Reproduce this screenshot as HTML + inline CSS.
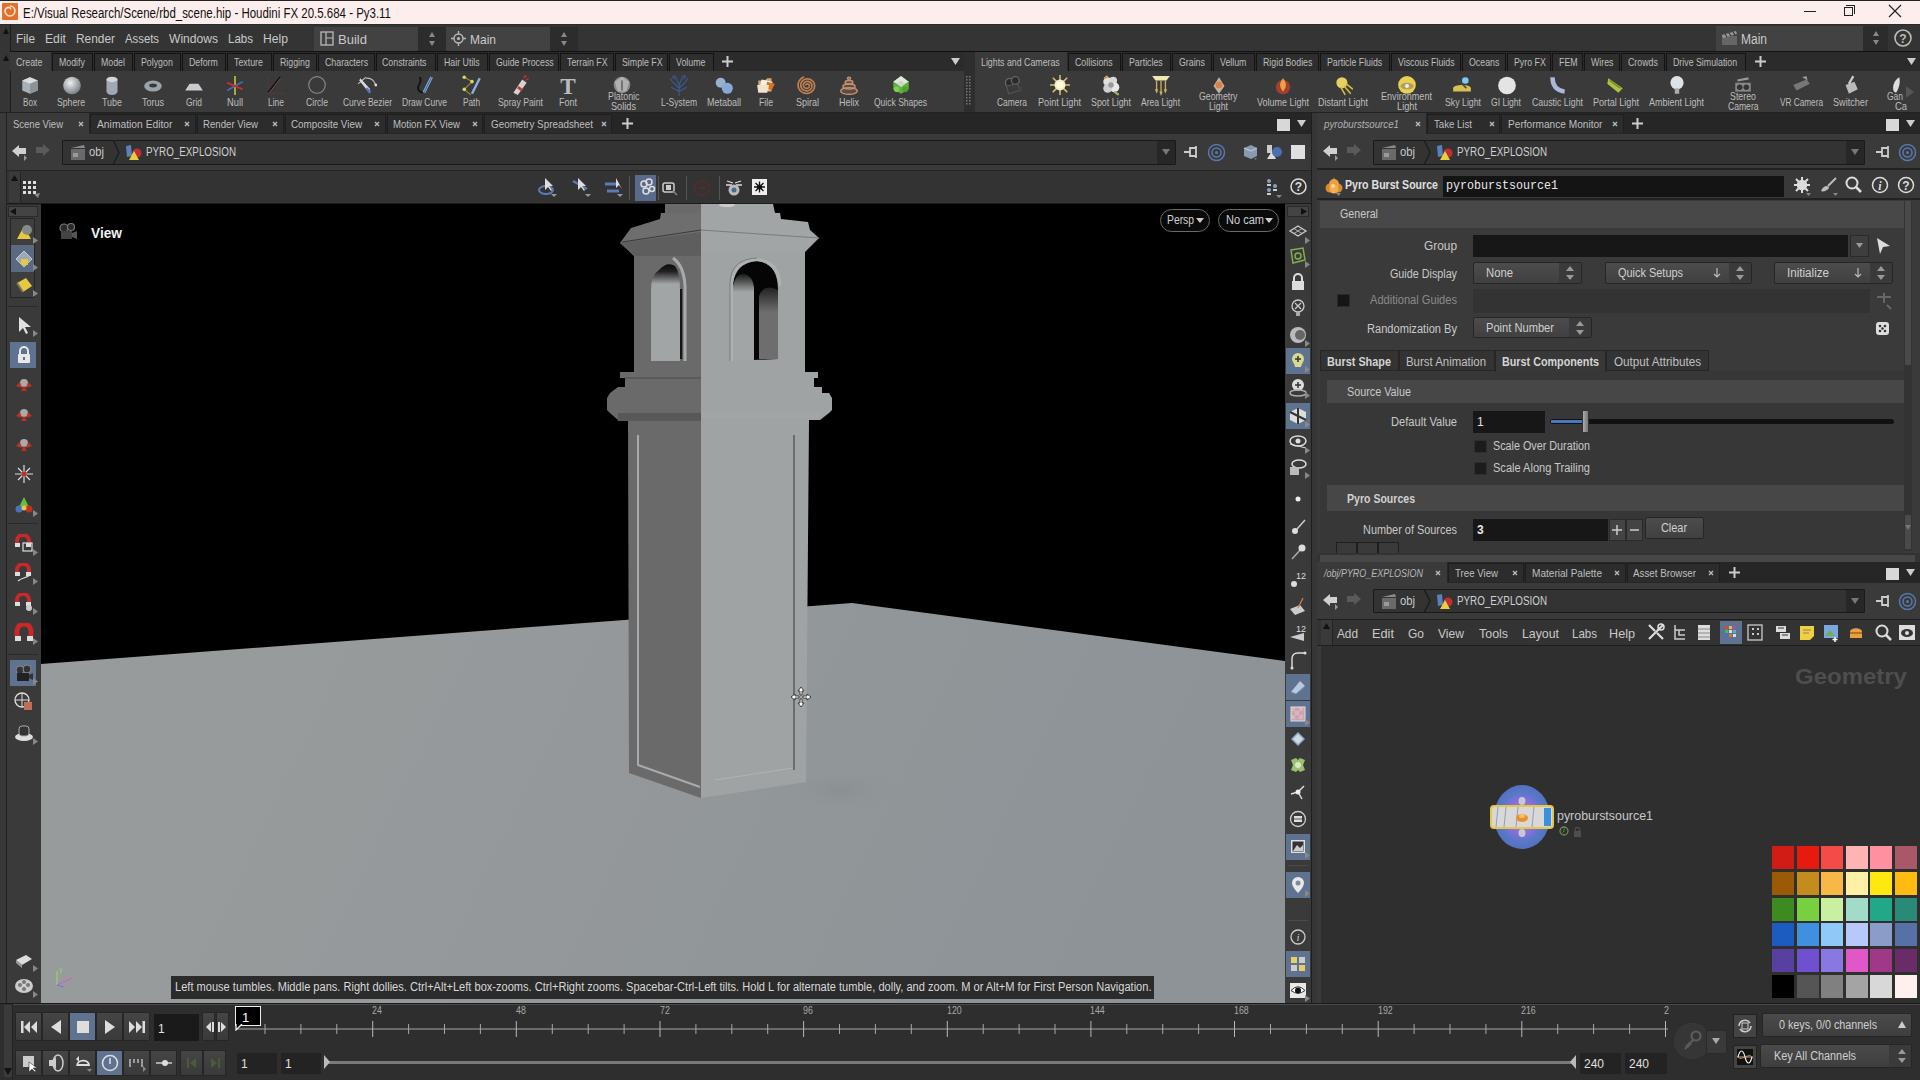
<!DOCTYPE html>
<html><head><meta charset="utf-8">
<style>
*{margin:0;padding:0;box-sizing:border-box}
html,body{width:1920px;height:1080px;overflow:hidden;background:#2e2e2e;font-family:"Liberation Sans",sans-serif;color:#c8c8c8}
.a{position:absolute}
.t{position:absolute;white-space:nowrap;line-height:1;transform-origin:0 0}
</style></head><body>
<div class="a" style="left:0px;top:0px;width:1920px;height:1px;background:#222;"></div>
<div class="a" style="left:0px;top:1px;width:1920px;height:23px;background:#fdeeee;"></div>
<div class="a" style="left:0px;top:24px;width:1920px;height:1px;background:#2a2a2a;"></div>
<div class="a" style="left:2px;top:3px;width:16px;height:17px;background:#e0702a;border-radius:1px"></div>
<svg class="a" style="left:2px;top:3px;" width="16" height="17" viewBox="0 0 16 17"><path d="M8 3 a5 5 0 1 1 -5 5 a3.6 3.6 0 0 1 3.6 -3.6 a2.2 2.2 0 0 1 2.2 2.2" fill="none" stroke="#fbe3cf" stroke-width="1.6"/></svg>
<div class="t" style="left:23.0px;top:5.6px;font-size:14px;color:#101010;font-family:'Liberation Sans',sans-serif;transform:scaleX(0.819);">E:/Visual Research/Scene/rbd_scene.hip - Houdini FX 20.5.684 - Py3.11</div>
<div class="a" style="left:1804px;top:11px;width:12px;height:1px;background:#222;"></div>
<div class="a" style="left:1844px;top:7px;width:9px;height:9px;border:1px solid #222"></div>
<div class="a" style="left:1846px;top:5px;width:9px;height:9px;border-top:1px solid #222;border-right:1px solid #222"></div>
<svg class="a" style="left:1888px;top:4px;" width="14" height="14" viewBox="0 0 14 14"><path d="M1 1L13 13M13 1L1 13" stroke="#222" stroke-width="1.2"/></svg>
<div class="a" style="left:0px;top:25px;width:1920px;height:27px;background:#343434;"></div>
<div class="a" style="left:0px;top:51px;width:1920px;height:1px;background:#111;"></div>
<div class="a" style="left:0px;top:25px;width:10px;height:27px;background:#353535;"></div>
<div class="a" style="left:10px;top:25px;width:1px;height:27px;background:#1c1c1c;"></div>
<svg class="a" style="left:2px;top:27px;" width="8" height="8" viewBox="0 0 8 8"><path d="M4 1L7 7H1Z" fill="#111"/></svg>
<div class="t" style="left:16.0px;top:32.3px;font-size:13px;color:#c9c9c9;font-family:'Liberation Sans',sans-serif;transform:scaleX(0.907);">File</div>
<div class="t" style="left:45.0px;top:32.3px;font-size:13px;color:#c9c9c9;font-family:'Liberation Sans',sans-serif;transform:scaleX(0.937);">Edit</div>
<div class="t" style="left:76.0px;top:32.3px;font-size:13px;color:#c9c9c9;font-family:'Liberation Sans',sans-serif;transform:scaleX(0.915);">Render</div>
<div class="t" style="left:125.0px;top:32.3px;font-size:13px;color:#c9c9c9;font-family:'Liberation Sans',sans-serif;transform:scaleX(0.871);">Assets</div>
<div class="t" style="left:169.0px;top:32.3px;font-size:13px;color:#c9c9c9;font-family:'Liberation Sans',sans-serif;transform:scaleX(0.929);">Windows</div>
<div class="t" style="left:228.0px;top:32.3px;font-size:13px;color:#c9c9c9;font-family:'Liberation Sans',sans-serif;transform:scaleX(0.887);">Labs</div>
<div class="t" style="left:263.0px;top:32.3px;font-size:13px;color:#c9c9c9;font-family:'Liberation Sans',sans-serif;transform:scaleX(0.935);">Help</div>
<div class="a" style="left:314px;top:27px;width:132px;height:24px;background:#424242"></div>
<div class="a" style="left:418px;top:27px;width:28px;height:24px;background:#2c2c2c;"></div>
<svg class="a" style="left:320px;top:31px;" width="14" height="15" viewBox="0 0 14 15"><rect x="1" y="1" width="12" height="13" fill="none" stroke="#bbb" stroke-width="1.3"/><path d="M6 1V14M6 7H13" stroke="#bbb" stroke-width="1.2"/></svg>
<div class="t" style="left:338.0px;top:32.5px;font-size:13px;color:#c9c9c9;font-family:'Liberation Sans',sans-serif;">Build</div>
<svg class="a" style="left:427px;top:31px;" width="10" height="16" viewBox="0 0 10 16"><path d="M5 1L8 6H2Z M5 15L8 10H2Z" fill="#888"/></svg>
<div class="a" style="left:446px;top:27px;width:132px;height:24px;background:#424242"></div>
<div class="a" style="left:550px;top:27px;width:28px;height:24px;background:#2c2c2c;"></div>
<svg class="a" style="left:451px;top:31px;" width="15" height="15" viewBox="0 0 15 15"><circle cx="7.5" cy="7.5" r="4.5" fill="none" stroke="#bbb" stroke-width="1.4"/><circle cx="7.5" cy="7.5" r="1.6" fill="#bbb"/><path d="M7.5 0V3M7.5 12V15M0 7.5H3M12 7.5H15" stroke="#bbb" stroke-width="1.3"/></svg>
<div class="t" style="left:470.0px;top:32.5px;font-size:13px;color:#c9c9c9;font-family:'Liberation Sans',sans-serif;transform:scaleX(0.923);">Main</div>
<svg class="a" style="left:559px;top:31px;" width="10" height="16" viewBox="0 0 10 16"><path d="M5 1L8 6H2Z M5 15L8 10H2Z" fill="#888"/></svg>
<div class="a" style="left:1716px;top:26px;width:172px;height:25px;background:#424242"></div>
<div class="a" style="left:1863px;top:26px;width:25px;height:25px;background:#2c2c2c;"></div>
<svg class="a" style="left:1721px;top:30px;" width="17" height="16" viewBox="0 0 17 16"><rect x="1" y="6" width="15" height="9" fill="#666"/><path d="M1 5L15 1L16 4L2 8Z" fill="#999"/><path d="M4 4L6 7M8 3L10 6M12 2L14 5" stroke="#333" stroke-width="1.2"/></svg>
<div class="t" style="left:1741.0px;top:31.6px;font-size:14px;color:#c9c9c9;font-family:'Liberation Sans',sans-serif;transform:scaleX(0.857);">Main</div>
<svg class="a" style="left:1871px;top:30px;" width="10" height="16" viewBox="0 0 10 16"><path d="M5 1L8 6H2Z M5 15L8 10H2Z" fill="#888"/></svg>
<svg class="a" style="left:1893px;top:28px;" width="20" height="20" viewBox="0 0 20 20"><circle cx="10" cy="10" r="8" fill="none" stroke="#bbb" stroke-width="1.6"/><text x="10" y="14.5" font-size="12" font-weight="bold" text-anchor="middle" fill="#bbb" font-family="Liberation Sans">?</text></svg>
<div class="a" style="left:0px;top:52px;width:1920px;height:19px;background:#2b2b2b;"></div>
<div class="a" style="left:0px;top:52px;width:10px;height:61px;background:#353535;"></div>
<div class="a" style="left:10px;top:52px;width:1px;height:61px;background:#1c1c1c;"></div>
<svg class="a" style="left:2px;top:54px;" width="8" height="8" viewBox="0 0 8 8"><path d="M4 1L7 7H1Z" fill="#111"/></svg>
<div class="a" style="left:10px;top:52px;width:41px;height:19px;background:#3a3a3a;"></div>
<div class="t" style="left:16.0px;top:56.5px;font-size:11px;color:#bdbdbd;font-family:'Liberation Sans',sans-serif;transform:scaleX(0.800);">Create</div>
<div class="a" style="left:52px;top:53px;width:41px;height:18px;background:#2e2e2e;border:1px solid #141414;border-bottom:none"></div>
<div class="t" style="left:59.0px;top:56.5px;font-size:11px;color:#bdbdbd;font-family:'Liberation Sans',sans-serif;transform:scaleX(0.800);">Modify</div>
<div class="a" style="left:94px;top:53px;width:39px;height:18px;background:#2e2e2e;border:1px solid #141414;border-bottom:none"></div>
<div class="t" style="left:101.0px;top:56.5px;font-size:11px;color:#bdbdbd;font-family:'Liberation Sans',sans-serif;transform:scaleX(0.800);">Model</div>
<div class="a" style="left:134px;top:53px;width:47px;height:18px;background:#2e2e2e;border:1px solid #141414;border-bottom:none"></div>
<div class="t" style="left:141.0px;top:56.5px;font-size:11px;color:#bdbdbd;font-family:'Liberation Sans',sans-serif;transform:scaleX(0.800);">Polygon</div>
<div class="a" style="left:182px;top:53px;width:44px;height:18px;background:#2e2e2e;border:1px solid #141414;border-bottom:none"></div>
<div class="t" style="left:189.0px;top:56.5px;font-size:11px;color:#bdbdbd;font-family:'Liberation Sans',sans-serif;transform:scaleX(0.800);">Deform</div>
<div class="a" style="left:227px;top:53px;width:45px;height:18px;background:#2e2e2e;border:1px solid #141414;border-bottom:none"></div>
<div class="t" style="left:234.0px;top:56.5px;font-size:11px;color:#bdbdbd;font-family:'Liberation Sans',sans-serif;transform:scaleX(0.800);">Texture</div>
<div class="a" style="left:273px;top:53px;width:44px;height:18px;background:#2e2e2e;border:1px solid #141414;border-bottom:none"></div>
<div class="t" style="left:280.0px;top:56.5px;font-size:11px;color:#bdbdbd;font-family:'Liberation Sans',sans-serif;transform:scaleX(0.800);">Rigging</div>
<div class="a" style="left:318px;top:53px;width:57px;height:18px;background:#2e2e2e;border:1px solid #141414;border-bottom:none"></div>
<div class="t" style="left:325.0px;top:56.5px;font-size:11px;color:#bdbdbd;font-family:'Liberation Sans',sans-serif;transform:scaleX(0.800);">Characters</div>
<div class="a" style="left:376px;top:53px;width:60px;height:18px;background:#2e2e2e;border:1px solid #141414;border-bottom:none"></div>
<div class="t" style="left:382.0px;top:56.5px;font-size:11px;color:#bdbdbd;font-family:'Liberation Sans',sans-serif;transform:scaleX(0.800);">Constraints</div>
<div class="a" style="left:437px;top:53px;width:51px;height:18px;background:#2e2e2e;border:1px solid #141414;border-bottom:none"></div>
<div class="t" style="left:444.0px;top:56.5px;font-size:11px;color:#bdbdbd;font-family:'Liberation Sans',sans-serif;transform:scaleX(0.800);">Hair Utils</div>
<div class="a" style="left:489px;top:53px;width:70px;height:18px;background:#2e2e2e;border:1px solid #141414;border-bottom:none"></div>
<div class="t" style="left:496.0px;top:56.5px;font-size:11px;color:#bdbdbd;font-family:'Liberation Sans',sans-serif;transform:scaleX(0.800);">Guide Process</div>
<div class="a" style="left:560px;top:53px;width:54px;height:18px;background:#2e2e2e;border:1px solid #141414;border-bottom:none"></div>
<div class="t" style="left:567.0px;top:56.5px;font-size:11px;color:#bdbdbd;font-family:'Liberation Sans',sans-serif;transform:scaleX(0.800);">Terrain FX</div>
<div class="a" style="left:615px;top:53px;width:53px;height:18px;background:#2e2e2e;border:1px solid #141414;border-bottom:none"></div>
<div class="t" style="left:622.0px;top:56.5px;font-size:11px;color:#bdbdbd;font-family:'Liberation Sans',sans-serif;transform:scaleX(0.800);">Simple FX</div>
<div class="a" style="left:669px;top:53px;width:45px;height:18px;background:#2e2e2e;border:1px solid #141414;border-bottom:none"></div>
<div class="t" style="left:676.0px;top:56.5px;font-size:11px;color:#bdbdbd;font-family:'Liberation Sans',sans-serif;transform:scaleX(0.800);">Volume</div>
<svg class="a" style="left:722px;top:56px;" width="11" height="11" viewBox="0 0 11 11"><path d="M5.5 0V11M0 5.5H11" stroke="#ccc" stroke-width="2"/></svg>
<svg class="a" style="left:951px;top:58px;" width="9" height="7" viewBox="0 0 9 7"><path d="M0 0H9L4.5 7Z" fill="#ccc"/></svg>
<div class="a" style="left:964px;top:52px;width:11px;height:61px;background:#2e2e2e;"></div>
<svg class="a" style="left:966px;top:76px;" width="6" height="30" viewBox="0 0 6 30"><rect x="0" y="0" width="1.5" height="1.5" fill="#777"/><rect x="0" y="3" width="1.5" height="1.5" fill="#777"/><rect x="0" y="6" width="1.5" height="1.5" fill="#777"/><rect x="0" y="9" width="1.5" height="1.5" fill="#777"/><rect x="0" y="12" width="1.5" height="1.5" fill="#777"/><rect x="0" y="15" width="1.5" height="1.5" fill="#777"/><rect x="0" y="18" width="1.5" height="1.5" fill="#777"/><rect x="0" y="21" width="1.5" height="1.5" fill="#777"/><rect x="0" y="24" width="1.5" height="1.5" fill="#777"/><rect x="0" y="27" width="1.5" height="1.5" fill="#777"/><rect x="3" y="0" width="1.5" height="1.5" fill="#777"/><rect x="3" y="3" width="1.5" height="1.5" fill="#777"/><rect x="3" y="6" width="1.5" height="1.5" fill="#777"/><rect x="3" y="9" width="1.5" height="1.5" fill="#777"/><rect x="3" y="12" width="1.5" height="1.5" fill="#777"/><rect x="3" y="15" width="1.5" height="1.5" fill="#777"/><rect x="3" y="18" width="1.5" height="1.5" fill="#777"/><rect x="3" y="21" width="1.5" height="1.5" fill="#777"/><rect x="3" y="24" width="1.5" height="1.5" fill="#777"/><rect x="3" y="27" width="1.5" height="1.5" fill="#777"/></svg>
<div class="a" style="left:975px;top:52px;width:92px;height:19px;background:#3a3a3a;"></div>
<div class="t" style="left:981.0px;top:56.5px;font-size:11px;color:#bdbdbd;font-family:'Liberation Sans',sans-serif;transform:scaleX(0.800);">Lights and Cameras</div>
<div class="a" style="left:1068px;top:53px;width:53px;height:18px;background:#2e2e2e;border:1px solid #141414;border-bottom:none"></div>
<div class="t" style="left:1075.0px;top:56.5px;font-size:11px;color:#bdbdbd;font-family:'Liberation Sans',sans-serif;transform:scaleX(0.800);">Collisions</div>
<div class="a" style="left:1122px;top:53px;width:49px;height:18px;background:#2e2e2e;border:1px solid #141414;border-bottom:none"></div>
<div class="t" style="left:1129.0px;top:56.5px;font-size:11px;color:#bdbdbd;font-family:'Liberation Sans',sans-serif;transform:scaleX(0.800);">Particles</div>
<div class="a" style="left:1172px;top:53px;width:40px;height:18px;background:#2e2e2e;border:1px solid #141414;border-bottom:none"></div>
<div class="t" style="left:1179.0px;top:56.5px;font-size:11px;color:#bdbdbd;font-family:'Liberation Sans',sans-serif;transform:scaleX(0.800);">Grains</div>
<div class="a" style="left:1213px;top:53px;width:42px;height:18px;background:#2e2e2e;border:1px solid #141414;border-bottom:none"></div>
<div class="t" style="left:1220.0px;top:56.5px;font-size:11px;color:#bdbdbd;font-family:'Liberation Sans',sans-serif;transform:scaleX(0.800);">Vellum</div>
<div class="a" style="left:1256px;top:53px;width:63px;height:18px;background:#2e2e2e;border:1px solid #141414;border-bottom:none"></div>
<div class="t" style="left:1263.0px;top:56.5px;font-size:11px;color:#bdbdbd;font-family:'Liberation Sans',sans-serif;transform:scaleX(0.800);">Rigid Bodies</div>
<div class="a" style="left:1320px;top:53px;width:70px;height:18px;background:#2e2e2e;border:1px solid #141414;border-bottom:none"></div>
<div class="t" style="left:1327.0px;top:56.5px;font-size:11px;color:#bdbdbd;font-family:'Liberation Sans',sans-serif;transform:scaleX(0.800);">Particle Fluids</div>
<div class="a" style="left:1391px;top:53px;width:70px;height:18px;background:#2e2e2e;border:1px solid #141414;border-bottom:none"></div>
<div class="t" style="left:1398.0px;top:56.5px;font-size:11px;color:#bdbdbd;font-family:'Liberation Sans',sans-serif;transform:scaleX(0.800);">Viscous Fluids</div>
<div class="a" style="left:1462px;top:53px;width:44px;height:18px;background:#2e2e2e;border:1px solid #141414;border-bottom:none"></div>
<div class="t" style="left:1469.0px;top:56.5px;font-size:11px;color:#bdbdbd;font-family:'Liberation Sans',sans-serif;transform:scaleX(0.800);">Oceans</div>
<div class="a" style="left:1507px;top:53px;width:44px;height:18px;background:#2e2e2e;border:1px solid #141414;border-bottom:none"></div>
<div class="t" style="left:1514.0px;top:56.5px;font-size:11px;color:#bdbdbd;font-family:'Liberation Sans',sans-serif;transform:scaleX(0.800);">Pyro FX</div>
<div class="a" style="left:1552px;top:53px;width:31px;height:18px;background:#2e2e2e;border:1px solid #141414;border-bottom:none"></div>
<div class="t" style="left:1559.0px;top:56.5px;font-size:11px;color:#bdbdbd;font-family:'Liberation Sans',sans-serif;transform:scaleX(0.800);">FEM</div>
<div class="a" style="left:1584px;top:53px;width:36px;height:18px;background:#2e2e2e;border:1px solid #141414;border-bottom:none"></div>
<div class="t" style="left:1591.0px;top:56.5px;font-size:11px;color:#bdbdbd;font-family:'Liberation Sans',sans-serif;transform:scaleX(0.800);">Wires</div>
<div class="a" style="left:1621px;top:53px;width:44px;height:18px;background:#2e2e2e;border:1px solid #141414;border-bottom:none"></div>
<div class="t" style="left:1628.0px;top:56.5px;font-size:11px;color:#bdbdbd;font-family:'Liberation Sans',sans-serif;transform:scaleX(0.800);">Crowds</div>
<div class="a" style="left:1666px;top:53px;width:80px;height:18px;background:#2e2e2e;border:1px solid #141414;border-bottom:none"></div>
<div class="t" style="left:1673.0px;top:56.5px;font-size:11px;color:#bdbdbd;font-family:'Liberation Sans',sans-serif;transform:scaleX(0.800);">Drive Simulation</div>
<svg class="a" style="left:1755px;top:56px;" width="11" height="11" viewBox="0 0 11 11"><path d="M5.5 0V11M0 5.5H11" stroke="#ccc" stroke-width="2"/></svg>
<svg class="a" style="left:1907px;top:58px;" width="9" height="7" viewBox="0 0 9 7"><path d="M0 0H9L4.5 7Z" fill="#ccc"/></svg>
<div class="a" style="left:11px;top:71px;width:953px;height:42px;background:#3a3a3a;"></div>
<div class="a" style="left:975px;top:71px;width:945px;height:42px;background:#3a3a3a;"></div>
<div class="a" style="left:0px;top:112px;width:1920px;height:1px;background:#222;"></div>
<svg class="a" style="left:20px;top:75px" width="20" height="21" viewBox="0 0 18 19"><path d="M2 5L9 2L16 5V14L9 17L2 14Z" fill="#a8b0b8"/><path d="M2 5L9 8L16 5L9 2Z" fill="#d8dde2"/><path d="M9 8V17L16 14V5Z" fill="#8a929a"/></svg>
<div class="t" style="left:23.0px;top:97.4px;font-size:10.5px;color:#bdbdbd;font-family:'Liberation Sans',sans-serif;transform:scaleX(0.774);">Box</div>
<svg class="a" style="left:62px;top:75px" width="20" height="21" viewBox="0 0 18 19"><defs><radialGradient id="gs" cx="0.4" cy="0.35" r="0.7"><stop offset="0" stop-color="#f0f0f0"/><stop offset="1" stop-color="#707880"/></radialGradient></defs><circle cx="9" cy="9.5" r="8" fill="url(#gs)"/></svg>
<div class="t" style="left:57.0px;top:97.4px;font-size:10.5px;color:#bdbdbd;font-family:'Liberation Sans',sans-serif;transform:scaleX(0.827);">Sphere</div>
<svg class="a" style="left:102px;top:75px" width="20" height="21" viewBox="0 0 18 19"><rect x="4" y="2" width="10" height="16" rx="5" ry="3" fill="#a0a8b0"/><ellipse cx="9" cy="4" rx="5" ry="2.5" fill="#d0d6dc"/></svg>
<div class="t" style="left:102.0px;top:97.4px;font-size:10.5px;color:#bdbdbd;font-family:'Liberation Sans',sans-serif;transform:scaleX(0.849);">Tube</div>
<svg class="a" style="left:143px;top:75px" width="20" height="21" viewBox="0 0 18 19"><ellipse cx="9" cy="10" rx="8" ry="5" fill="#9aa2aa"/><ellipse cx="9" cy="9.5" rx="3.5" ry="1.8" fill="#3a3a3a"/></svg>
<div class="t" style="left:142.0px;top:97.4px;font-size:10.5px;color:#bdbdbd;font-family:'Liberation Sans',sans-serif;transform:scaleX(0.857);">Torus</div>
<svg class="a" style="left:184px;top:75px" width="20" height="21" viewBox="0 0 18 19"><path d="M5 8H13L17 14H1Z" fill="#c8ccd0"/></svg>
<div class="t" style="left:186.0px;top:97.4px;font-size:10.5px;color:#bdbdbd;font-family:'Liberation Sans',sans-serif;transform:scaleX(0.807);">Grid</div>
<svg class="a" style="left:225px;top:75px" width="20" height="21" viewBox="0 0 18 19"><path d="M9 1V18" stroke="#c0c040" stroke-width="1.5"/><path d="M2 14L16 6" stroke="#4070c0" stroke-width="1.5"/><path d="M2 7L16 13" stroke="#c03030" stroke-width="1.8"/></svg>
<div class="t" style="left:227.0px;top:97.4px;font-size:10.5px;color:#bdbdbd;font-family:'Liberation Sans',sans-serif;transform:scaleX(0.885);">Null</div>
<svg class="a" style="left:266px;top:75px" width="20" height="21" viewBox="0 0 18 19"><path d="M2 1V17H17" stroke="#5a3a3a" stroke-width="0.8" fill="none"/><path d="M2 16L13 2" stroke="#111" stroke-width="1.8"/><path d="M2.5 16.5L13.5 2.5" stroke="#c06060" stroke-width="0.6"/></svg>
<div class="t" style="left:268.0px;top:97.4px;font-size:10.5px;color:#bdbdbd;font-family:'Liberation Sans',sans-serif;transform:scaleX(0.806);">Line</div>
<svg class="a" style="left:307px;top:75px" width="20" height="21" viewBox="0 0 18 19"><circle cx="9" cy="9" r="7.5" fill="none" stroke="#8a8a8a" stroke-width="1"/></svg>
<div class="t" style="left:306.0px;top:97.4px;font-size:10.5px;color:#bdbdbd;font-family:'Liberation Sans',sans-serif;transform:scaleX(0.820);">Circle</div>
<svg class="a" style="left:357px;top:75px" width="20" height="21" viewBox="0 0 18 19"><path d="M8 3Q14 2 17 9" stroke="#bbb" stroke-width="1" fill="none"/><circle cx="17" cy="9" r="1.3" fill="#ddd"/><path d="M1 8L8 2" stroke="#bbb" stroke-width="1"/><path d="M3 3L12 13L10 15L2 5Z" fill="#d8d8e0"/><path d="M9 11L13 15L11 17L8 13Z" fill="#5a70c0"/></svg>
<div class="t" style="left:343.0px;top:97.4px;font-size:10.5px;color:#bdbdbd;font-family:'Liberation Sans',sans-serif;transform:scaleX(0.807);">Curve Bezier</div>
<svg class="a" style="left:415px;top:75px" width="20" height="21" viewBox="0 0 18 19"><path d="M4 2C8 6 1 9 3 13C4 16 7 16 8 15" stroke="#111" stroke-width="1.6" fill="none"/><path d="M8 16L15 2" stroke="#8ab0e0" stroke-width="2.5"/><path d="M8 16L15 2" stroke="#4a6ab0" stroke-width="1"/></svg>
<div class="t" style="left:402.0px;top:97.4px;font-size:10.5px;color:#bdbdbd;font-family:'Liberation Sans',sans-serif;transform:scaleX(0.812);">Draw Curve</div>
<svg class="a" style="left:462px;top:75px" width="20" height="21" viewBox="0 0 18 19"><path d="M2 2L9 6L2 13L8 18" stroke="#a09040" stroke-width="1" fill="none"/><circle cx="2" cy="2" r="1.6" fill="#d8d860"/><circle cx="9" cy="6" r="1.6" fill="#d8d860"/><circle cx="2" cy="13" r="1.6" fill="#d8d860"/><path d="M9 17L16 3" stroke="#8ab0e0" stroke-width="2.2"/></svg>
<div class="t" style="left:463.0px;top:97.4px;font-size:10.5px;color:#bdbdbd;font-family:'Liberation Sans',sans-serif;transform:scaleX(0.787);">Path</div>
<svg class="a" style="left:510px;top:75px" width="20" height="21" viewBox="0 0 18 19"><path d="M3 16L11 4L15 7L7 18Z" fill="#d8d0d0"/><path d="M7 11L11 14" stroke="#b04040" stroke-width="2.5"/><path d="M12 3L15 1M14 5L17 3M13 1L14 0" stroke="#c03030" stroke-width="1.2"/></svg>
<div class="t" style="left:498.0px;top:97.4px;font-size:10.5px;color:#bdbdbd;font-family:'Liberation Sans',sans-serif;transform:scaleX(0.829);">Spray Paint</div>
<svg class="a" style="left:558px;top:75px" width="20" height="21" viewBox="0 0 18 19"><text x="9" y="17" font-size="21" font-weight="bold" text-anchor="middle" fill="#b8bcc0" font-family="Liberation Serif">T</text></svg>
<div class="t" style="left:559.0px;top:97.4px;font-size:10.5px;color:#bdbdbd;font-family:'Liberation Sans',sans-serif;transform:scaleX(0.857);">Font</div>
<svg class="a" style="left:612px;top:75px" width="20" height="21" viewBox="0 0 18 19"><circle cx="9" cy="9" r="7.5" fill="#8a8a8a"/><path d="M9 1.5L15.5 6L13 15L5 15L2.5 6Z" fill="#b0b0b0"/><path d="M9 5V14" stroke="#555" stroke-width="1.2"/></svg>
<svg class="a" style="left:669px;top:75px" width="20" height="21" viewBox="0 0 18 19"><path d="M9 19V8M9 12L3 6M9 12L15 6M9 9L6 2M9 9L12 2M9 15L2 11M9 15L16 11M3 6L1 3M15 6L17 3M6 2L4 0M12 2L14 0M5 4L3 1M13 4L15 1" stroke="#3a5a98" stroke-width="1"/></svg>
<div class="t" style="left:661.0px;top:97.4px;font-size:10.5px;color:#bdbdbd;font-family:'Liberation Sans',sans-serif;transform:scaleX(0.812);">L-System</div>
<svg class="a" style="left:714px;top:75px" width="20" height="21" viewBox="0 0 18 19"><circle cx="6" cy="7" r="4.5" fill="#9ab0d0"/><circle cx="12" cy="12" r="5" fill="#88a8d8"/></svg>
<div class="t" style="left:707.0px;top:97.4px;font-size:10.5px;color:#bdbdbd;font-family:'Liberation Sans',sans-serif;transform:scaleX(0.857);">Metaball</div>
<svg class="a" style="left:756px;top:75px" width="20" height="21" viewBox="0 0 18 19"><path d="M2 5H8L10 3H14V15H2Z" fill="#d8a070"/><path d="M5 4L15 6L13 14L3 12Z" fill="#f4f0e8"/><path d="M10 6L17 8L14 14L9 12Z" fill="#e07020"/><path d="M1 9H12L10 16H2Z" fill="#f0e4d0"/></svg>
<div class="t" style="left:759.0px;top:97.4px;font-size:10.5px;color:#bdbdbd;font-family:'Liberation Sans',sans-serif;transform:scaleX(0.827);">File</div>
<svg class="a" style="left:797px;top:75px" width="20" height="21" viewBox="0 0 18 19"><path d="M8.10 9.50 L8.07 9.41 L8.04 9.31 L8.03 9.21 L8.03 9.11 L8.04 9.00 L8.07 8.89 L8.11 8.78 L8.17 8.67 L8.23 8.57 L8.32 8.47 L8.41 8.37 L8.52 8.29 L8.64 8.21 L8.78 8.15 L8.92 8.10 L9.07 8.06 L9.23 8.04 L9.39 8.03 L9.56 8.05 L9.73 8.07 L9.89 8.12 L10.06 8.18 L10.22 8.26 L10.37 8.36 L10.52 8.48 L10.65 8.61 L10.77 8.76 L10.88 8.92 L10.97 9.10 L11.04 9.29 L11.09 9.48 L11.12 9.68 L11.13 9.89 L11.11 10.11 L11.07 10.32 L11.01 10.53 L10.92 10.74 L10.81 10.94 L10.67 11.13 L10.51 11.31 L10.33 11.48 L10.14 11.63 L9.92 11.76 L9.68 11.87 L9.43 11.96 L9.17 12.03 L8.90 12.07 L8.62 12.08 L8.34 12.07 L8.06 12.03 L7.78 11.96 L7.51 11.86 L7.24 11.73 L6.99 11.58 L6.75 11.40 L6.53 11.20 L6.33 10.97 L6.15 10.72 L6.00 10.45 L5.87 10.17 L5.78 9.87 L5.72 9.56 L5.69 9.24 L5.70 8.92 L5.74 8.60 L5.82 8.27 L5.93 7.96 L6.08 7.65 L6.26 7.36 L6.47 7.08 L6.72 6.82 L6.99 6.59 L7.30 6.38 L7.62 6.20 L7.97 6.05 L8.33 5.93 L8.71 5.85 L9.10 5.80 L9.50 5.79 L9.90 5.83 L10.30 5.90 L10.69 6.01 L11.07 6.15 L11.44 6.34 L11.79 6.56 L12.12 6.82 L12.41 7.11 L12.68 7.43 L12.92 7.78 L13.12 8.15 L13.28 8.55 L13.40 8.96 L13.47 9.38 L13.50 9.81 L13.48 10.25 L13.41 10.68 L13.30 11.11 L13.14 11.53 L12.94 11.94 L12.69 12.33 L12.40 12.69 L12.07 13.03 L11.70 13.34 L11.29 13.61 L10.86 13.84 L10.40 14.03 L9.92 14.18 L9.42 14.28 L8.91 14.33 L8.39 14.33 L7.88 14.29 L7.36 14.19 L6.86 14.04 L6.37 13.84 L5.90 13.60 L5.45 13.31 L5.04 12.97 L4.66 12.60 L4.32 12.18 L4.02 11.74 L3.77 11.26 L3.58 10.76 L3.43 10.24 L3.34 9.70 L3.31 9.16 L3.34 8.61 L3.43 8.06 L3.57 7.52 L3.77 7.00 L4.03 6.49 L4.35 6.00 L4.72 5.55 L5.13 5.13 L5.60 4.76 L6.10 4.42 L6.64 4.14 L7.21 3.90 L7.80 3.72 L8.42 3.60 L9.05 3.54 L9.69 3.54 L10.32 3.60 L10.96 3.72 L11.57 3.90 L12.17 4.15 L12.75 4.45 L13.29 4.81 L13.80 5.22 L14.26 5.68 L14.67 6.18 L15.03 6.72 L15.33 7.30 L15.56 7.91 L15.74 8.54 L15.84 9.19 L15.88 9.85 L15.85 10.51 L15.74 11.17 L15.56 11.82 L15.32 12.46 L15.00 13.07 L14.63 13.65 L14.18 14.19 L13.68 14.69 L13.13 15.14 L12.53 15.54 L11.89 15.88 L11.21 16.16 L10.49 16.37 L9.76 16.52 L9.01 16.59 L8.25 16.59 L7.50 16.52 L6.75 16.38 L6.02 16.16 L5.30 15.87 L4.63 15.51 L3.98 15.09 L3.39 14.61 L2.84 14.07 L2.36 13.47 L1.94 12.83 L1.58 12.15 L1.30 11.44 L1.10 10.70 L0.97 9.93 L0.93 9.16 L0.97 8.38 L1.09 7.61 L1.29 6.85 L1.58 6.11 L1.95 5.40 L2.39 4.72 L2.90 4.09 L3.48 3.50 L4.12 2.97 L4.82 2.51 L5.57 2.11 L6.36 1.78" stroke="#c08050" stroke-width="1.5" fill="none"/></svg>
<div class="t" style="left:796.0px;top:97.4px;font-size:10.5px;color:#bdbdbd;font-family:'Liberation Sans',sans-serif;transform:scaleX(0.857);">Spiral</div>
<svg class="a" style="left:839px;top:75px" width="20" height="21" viewBox="0 0 18 19"><path d="M9 1L1 14Q9 20 17 14Z" fill="#7a6050" opacity="0.5"/><ellipse cx="9" cy="14.5" rx="7.5" ry="3" fill="none" stroke="#c89070" stroke-width="1.3"/><ellipse cx="9" cy="10.5" rx="5.5" ry="2.3" fill="none" stroke="#c89070" stroke-width="1.3"/><ellipse cx="9" cy="6.5" rx="3.5" ry="1.6" fill="none" stroke="#c89070" stroke-width="1.3"/><ellipse cx="9" cy="3" rx="1.5" ry="1" fill="none" stroke="#c89070" stroke-width="1.2"/></svg>
<div class="t" style="left:839.0px;top:97.4px;font-size:10.5px;color:#bdbdbd;font-family:'Liberation Sans',sans-serif;transform:scaleX(0.857);">Helix</div>
<svg class="a" style="left:891px;top:75px" width="20" height="21" viewBox="0 0 18 19"><path d="M9 1L16 6L16 13L9 17L2 13L2 6Z" fill="#60b040"/><path d="M9 1L16 6L9 10L2 6Z" fill="#e0e8e0"/><path d="M5 8L9 5L13 8L9 11Z" fill="#c8d8c8"/><circle cx="5" cy="13" r="2.5" fill="#80d050"/><circle cx="13" cy="13" r="2.5" fill="#50a030"/></svg>
<div class="t" style="left:874.0px;top:97.4px;font-size:10.5px;color:#bdbdbd;font-family:'Liberation Sans',sans-serif;transform:scaleX(0.811);">Quick Shapes</div>
<svg class="a" style="left:1002px;top:75px" width="20" height="21" viewBox="0 0 18 19"><circle cx="7" cy="7" r="4" fill="#2a2a2a" stroke="#666" stroke-width="1.2"/><circle cx="12" cy="5" r="3.5" fill="#2a2a2a" stroke="#666" stroke-width="1.2"/><path d="M4 10L14 8L16 14L6 17Z" fill="#3a3a3a" stroke="#555"/><path d="M14 11L18 10V16L15 15Z" fill="#444"/></svg>
<div class="t" style="left:997.0px;top:97.4px;font-size:10.5px;color:#bdbdbd;font-family:'Liberation Sans',sans-serif;transform:scaleX(0.803);">Camera</div>
<svg class="a" style="left:1050px;top:75px" width="20" height="21" viewBox="0 0 18 19"><path d="M9 0V18M0 9H18M2.5 2.5L15.5 15.5M15.5 2.5L2.5 15.5" stroke="#d8c070" stroke-width="1.4"/><circle cx="9" cy="9" r="5" fill="#f4f0c0"/><circle cx="9" cy="9" r="3" fill="#fffbe0"/></svg>
<div class="t" style="left:1038.0px;top:97.4px;font-size:10.5px;color:#bdbdbd;font-family:'Liberation Sans',sans-serif;transform:scaleX(0.867);">Point Light</div>
<svg class="a" style="left:1101px;top:75px" width="20" height="21" viewBox="0 0 18 19"><circle cx="6" cy="6" r="4" fill="#e0e0e0"/><circle cx="11" cy="5" r="3.5" fill="#d8d8d8"/><circle cx="12" cy="11" r="4.5" fill="#e8e8e8"/><circle cx="6" cy="12" r="4" fill="#cfcfcf"/><circle cx="9" cy="9" r="2.5" fill="#999"/><path d="M12 15L16 18" stroke="#a0b060" stroke-width="2"/><path d="M3 3L6 1" stroke="#d0a050" stroke-width="2"/></svg>
<div class="t" style="left:1091.0px;top:97.4px;font-size:10.5px;color:#bdbdbd;font-family:'Liberation Sans',sans-serif;transform:scaleX(0.846);">Spot Light</div>
<svg class="a" style="left:1151px;top:75px" width="20" height="21" viewBox="0 0 18 19"><path d="M1 1H17L14 5H4Z" fill="#f0e8b0"/><path d="M5 5V15M9 5V17M13 5V15" stroke="#c8b060" stroke-width="1.2"/><path d="M3.5 13L5 17L6.5 13M7.5 15L9 19L10.5 15M11.5 13L13 17L14.5 13" fill="#c8b060"/></svg>
<div class="t" style="left:1141.0px;top:97.4px;font-size:10.5px;color:#bdbdbd;font-family:'Liberation Sans',sans-serif;transform:scaleX(0.815);">Area Light</div>
<svg class="a" style="left:1209px;top:75px" width="20" height="21" viewBox="0 0 18 19"><path d="M9 2L14 10L9 17L4 10Z" fill="#c0b0a0"/><circle cx="9" cy="9" r="3" fill="#e08040"/></svg>
<svg class="a" style="left:1273px;top:75px" width="20" height="21" viewBox="0 0 18 19"><circle cx="9" cy="11" r="6.5" fill="#a04030"/><path d="M9 3C12 7 13 10 9 15C5 10 6 7 9 3Z" fill="#f0a040"/></svg>
<div class="t" style="left:1257.0px;top:97.4px;font-size:10.5px;color:#bdbdbd;font-family:'Liberation Sans',sans-serif;transform:scaleX(0.857);">Volume Light</div>
<svg class="a" style="left:1333px;top:75px" width="20" height="21" viewBox="0 0 18 19"><circle cx="8" cy="7" r="5" fill="#e8d060"/><path d="M10 10L16 17M7 11L11 18M12 8L18 13" stroke="#d0b840" stroke-width="1.5"/></svg>
<div class="t" style="left:1318.0px;top:97.4px;font-size:10.5px;color:#bdbdbd;font-family:'Liberation Sans',sans-serif;transform:scaleX(0.857);">Distant Light</div>
<svg class="a" style="left:1397px;top:75px" width="20" height="21" viewBox="0 0 18 19"><circle cx="9" cy="9" r="8" fill="#e8d050"/><ellipse cx="9" cy="10" rx="6" ry="3" fill="#b0a060"/><circle cx="9" cy="10" r="1.8" fill="#eee"/></svg>
<svg class="a" style="left:1452px;top:75px" width="20" height="21" viewBox="0 0 18 19"><path d="M1 12C1 8 17 8 17 12V15H1Z" fill="#d8c050"/><path d="M5 4L13 12" stroke="#444" stroke-width="1.5"/><circle cx="12" cy="5" r="3" fill="#80c8f0"/></svg>
<div class="t" style="left:1445.0px;top:97.4px;font-size:10.5px;color:#bdbdbd;font-family:'Liberation Sans',sans-serif;transform:scaleX(0.834);">Sky Light</div>
<svg class="a" style="left:1497px;top:75px" width="20" height="21" viewBox="0 0 18 19"><circle cx="9" cy="9.5" r="8" fill="#e4e4e4"/></svg>
<div class="t" style="left:1491.0px;top:97.4px;font-size:10.5px;color:#bdbdbd;font-family:'Liberation Sans',sans-serif;transform:scaleX(0.816);">GI Light</div>
<svg class="a" style="left:1548px;top:75px" width="20" height="21" viewBox="0 0 18 19"><path d="M4 2C4 10 8 14 15 15" stroke="#a8b8d8" stroke-width="4" fill="none"/></svg>
<div class="t" style="left:1532.0px;top:97.4px;font-size:10.5px;color:#bdbdbd;font-family:'Liberation Sans',sans-serif;transform:scaleX(0.840);">Caustic Light</div>
<svg class="a" style="left:1605px;top:75px" width="20" height="21" viewBox="0 0 18 19"><path d="M3 3L16 12L12 16L2 8Z" fill="#b0c040"/><path d="M4 5L14 12" stroke="#708020" stroke-width="1"/></svg>
<div class="t" style="left:1593.0px;top:97.4px;font-size:10.5px;color:#bdbdbd;font-family:'Liberation Sans',sans-serif;transform:scaleX(0.866);">Portal Light</div>
<svg class="a" style="left:1667px;top:75px" width="20" height="21" viewBox="0 0 18 19"><circle cx="9" cy="7" r="6" fill="#dce4ea"/><rect x="7" y="12" width="4" height="5" fill="#aaa"/></svg>
<div class="t" style="left:1649.0px;top:97.4px;font-size:10.5px;color:#bdbdbd;font-family:'Liberation Sans',sans-serif;transform:scaleX(0.857);">Ambient Light</div>
<svg class="a" style="left:1733px;top:75px" width="20" height="21" viewBox="0 0 18 19"><rect x="2" y="7" width="14" height="8" fill="#888"/><circle cx="6" cy="11" r="2.5" fill="#333"/><circle cx="12" cy="11" r="2.5" fill="#333"/><path d="M4 5L14 3" stroke="#999" stroke-width="2"/></svg>
<svg class="a" style="left:1791px;top:75px" width="20" height="21" viewBox="0 0 18 19"><path d="M2 9L14 4L17 8L5 14Z" fill="#777"/><path d="M10 2L14 1L15 5Z" fill="#999"/></svg>
<div class="t" style="left:1780.0px;top:97.4px;font-size:10.5px;color:#bdbdbd;font-family:'Liberation Sans',sans-serif;transform:scaleX(0.784);">VR Camera</div>
<svg class="a" style="left:1840px;top:75px" width="20" height="21" viewBox="0 0 18 19"><path d="M5 9L13 6L16 13L8 17Z" fill="#bbb"/><path d="M8 8L12 1" stroke="#ccc" stroke-width="2"/></svg>
<div class="t" style="left:1833.0px;top:97.4px;font-size:10.5px;color:#bdbdbd;font-family:'Liberation Sans',sans-serif;transform:scaleX(0.869);">Switcher</div>
<svg class="a" style="left:1886px;top:75px" width="20" height="21" viewBox="0 0 18 19"><path d="M7 15C5 10 8 4 12 2C13 6 12 12 9 16Z" fill="#ddd"/></svg>
<div class="t" style="left:607.5px;top:91.1px;font-size:10.5px;color:#bdbdbd;font-family:'Liberation Sans',sans-serif;transform:scaleX(0.843);">Platonic</div>
<div class="t" style="left:611.0px;top:100.6px;font-size:10.5px;color:#bdbdbd;font-family:'Liberation Sans',sans-serif;transform:scaleX(0.874);">Solids</div>
<div class="t" style="left:1199.0px;top:91.1px;font-size:10.5px;color:#bdbdbd;font-family:'Liberation Sans',sans-serif;transform:scaleX(0.835);">Geometry</div>
<div class="t" style="left:1209.0px;top:100.6px;font-size:10.5px;color:#bdbdbd;font-family:'Liberation Sans',sans-serif;transform:scaleX(0.834);">Light</div>
<div class="t" style="left:1381.0px;top:91.1px;font-size:10.5px;color:#bdbdbd;font-family:'Liberation Sans',sans-serif;transform:scaleX(0.865);">Environment</div>
<div class="t" style="left:1397.0px;top:100.6px;font-size:10.5px;color:#bdbdbd;font-family:'Liberation Sans',sans-serif;transform:scaleX(0.878);">Light</div>
<div class="t" style="left:1730.0px;top:91.1px;font-size:10.5px;color:#bdbdbd;font-family:'Liberation Sans',sans-serif;transform:scaleX(0.840);">Stereo</div>
<div class="t" style="left:1727.5px;top:100.6px;font-size:10.5px;color:#bdbdbd;font-family:'Liberation Sans',sans-serif;transform:scaleX(0.817);">Camera</div>
<div class="t" style="left:1887.0px;top:91.1px;font-size:10.5px;color:#bdbdbd;font-family:'Liberation Sans',sans-serif;transform:scaleX(0.806);">Gan</div>
<div class="t" style="left:1895.0px;top:100.6px;font-size:10.5px;color:#bdbdbd;font-family:'Liberation Sans',sans-serif;transform:scaleX(0.894);">Ca</div>
<svg class="a" style="left:1906px;top:86px;" width="8" height="12" viewBox="0 0 8 12"><path d="M0 0L8 6L0 12Z" fill="#555"/></svg>
<div class="a" style="left:0px;top:113px;width:1920px;height:21px;background:#262626;"></div>
<div class="a" style="left:0px;top:113px;width:6px;height:890px;background:#3a3a3a;"></div>
<div class="a" style="left:6px;top:113px;width:83px;height:21px;background:#3a3a3a;"></div>
<div class="t" style="left:13.0px;top:119.3px;font-size:11.5px;color:#bfbfbf;font-family:'Liberation Sans',sans-serif;transform:scaleX(0.826);">Scene View</div>
<svg class="a" style="left:77.5px;top:121px;" width="6" height="6" viewBox="0 0 6 6"><path d="M1 1L5 5M5 1L1 5" stroke="#b8b8b8" stroke-width="1.4"/></svg>
<div class="a" style="left:90px;top:114px;width:106px;height:19px;background:#2c2c2c;border:1px solid #1e1e1e;border-bottom:none"></div>
<div class="t" style="left:97.0px;top:119.3px;font-size:11.5px;color:#bfbfbf;font-family:'Liberation Sans',sans-serif;transform:scaleX(0.895);">Animation Editor</div>
<svg class="a" style="left:184px;top:121px;" width="6" height="6" viewBox="0 0 6 6"><path d="M1 1L5 5M5 1L1 5" stroke="#b8b8b8" stroke-width="1.4"/></svg>
<div class="a" style="left:197px;top:114px;width:87px;height:19px;background:#2c2c2c;border:1px solid #1e1e1e;border-bottom:none"></div>
<div class="t" style="left:203.0px;top:119.3px;font-size:11.5px;color:#bfbfbf;font-family:'Liberation Sans',sans-serif;transform:scaleX(0.838);">Render View</div>
<svg class="a" style="left:272px;top:121px;" width="6" height="6" viewBox="0 0 6 6"><path d="M1 1L5 5M5 1L1 5" stroke="#b8b8b8" stroke-width="1.4"/></svg>
<div class="a" style="left:285px;top:114px;width:101px;height:19px;background:#2c2c2c;border:1px solid #1e1e1e;border-bottom:none"></div>
<div class="t" style="left:291.0px;top:119.3px;font-size:11.5px;color:#bfbfbf;font-family:'Liberation Sans',sans-serif;transform:scaleX(0.857);">Composite View</div>
<svg class="a" style="left:374px;top:121px;" width="6" height="6" viewBox="0 0 6 6"><path d="M1 1L5 5M5 1L1 5" stroke="#b8b8b8" stroke-width="1.4"/></svg>
<div class="a" style="left:387px;top:114px;width:96px;height:19px;background:#2c2c2c;border:1px solid #1e1e1e;border-bottom:none"></div>
<div class="t" style="left:393.0px;top:119.3px;font-size:11.5px;color:#bfbfbf;font-family:'Liberation Sans',sans-serif;transform:scaleX(0.834);">Motion FX View</div>
<svg class="a" style="left:471.5px;top:121px;" width="6" height="6" viewBox="0 0 6 6"><path d="M1 1L5 5M5 1L1 5" stroke="#b8b8b8" stroke-width="1.4"/></svg>
<div class="a" style="left:484px;top:114px;width:128px;height:19px;background:#2c2c2c;border:1px solid #1e1e1e;border-bottom:none"></div>
<div class="t" style="left:491.0px;top:119.3px;font-size:11.5px;color:#bfbfbf;font-family:'Liberation Sans',sans-serif;transform:scaleX(0.858);">Geometry Spreadsheet</div>
<svg class="a" style="left:601px;top:121px;" width="6" height="6" viewBox="0 0 6 6"><path d="M1 1L5 5M5 1L1 5" stroke="#b8b8b8" stroke-width="1.4"/></svg>
<svg class="a" style="left:622px;top:118px;" width="11" height="11" viewBox="0 0 11 11"><path d="M5.5 0V11M0 5.5H11" stroke="#ccc" stroke-width="2"/></svg>
<div class="a" style="left:1277px;top:119px;width:13px;height:12px;background:#d8d8d8;"></div>
<svg class="a" style="left:1297px;top:120px;" width="9" height="7" viewBox="0 0 9 7"><path d="M0 0H9L4.5 7Z" fill="#ccc"/></svg>
<div class="a" style="left:1311px;top:113px;width:6px;height:890px;background:#363636;"></div>
<div class="a" style="left:1311px;top:113px;width:1px;height:890px;background:#1e1e1e;"></div>
<div class="a" style="left:1317px;top:113px;width:109px;height:21px;background:#3a3a3a;"></div>
<div class="t" style="left:1324.0px;top:119.3px;font-size:11.5px;color:#b0b0b0;font-family:'Liberation Sans',sans-serif;font-style:italic;transform:scaleX(0.844);">pyroburstsource1</div>
<svg class="a" style="left:1414.5px;top:121px;" width="6" height="6" viewBox="0 0 6 6"><path d="M1 1L5 5M5 1L1 5" stroke="#b8b8b8" stroke-width="1.4"/></svg>
<div class="a" style="left:1427px;top:114px;width:73px;height:19px;background:#2c2c2c;border:1px solid #1e1e1e;border-bottom:none"></div>
<div class="t" style="left:1434.0px;top:119.3px;font-size:11.5px;color:#bfbfbf;font-family:'Liberation Sans',sans-serif;transform:scaleX(0.837);">Take List</div>
<svg class="a" style="left:1489px;top:121px;" width="6" height="6" viewBox="0 0 6 6"><path d="M1 1L5 5M5 1L1 5" stroke="#b8b8b8" stroke-width="1.4"/></svg>
<div class="a" style="left:1501px;top:114px;width:123px;height:19px;background:#2c2c2c;border:1px solid #1e1e1e;border-bottom:none"></div>
<div class="t" style="left:1508.0px;top:119.3px;font-size:11.5px;color:#bfbfbf;font-family:'Liberation Sans',sans-serif;transform:scaleX(0.880);">Performance Monitor</div>
<svg class="a" style="left:1612px;top:121px;" width="6" height="6" viewBox="0 0 6 6"><path d="M1 1L5 5M5 1L1 5" stroke="#b8b8b8" stroke-width="1.4"/></svg>
<svg class="a" style="left:1632px;top:118px;" width="11" height="11" viewBox="0 0 11 11"><path d="M5.5 0V11M0 5.5H11" stroke="#ccc" stroke-width="2"/></svg>
<div class="a" style="left:1886px;top:119px;width:13px;height:12px;background:#d8d8d8;"></div>
<svg class="a" style="left:1906px;top:120px;" width="9" height="7" viewBox="0 0 9 7"><path d="M0 0H9L4.5 7Z" fill="#ccc"/></svg>
<div class="a" style="left:6px;top:134px;width:1305px;height:36px;background:#3a3a3a;"></div>
<svg class="a" style="left:11px;top:143px;" width="20" height="18" viewBox="0 0 20 18"><path d="M1 8L8 2V5H15V11H8V14Z" fill="#d0d0d0"/><path d="M13 12L16 15L13 18Z" fill="#999"/></svg>
<svg class="a" style="left:35px;top:143px;" width="16" height="14" viewBox="0 0 16 14"><path d="M15 7L8 1V4H1V10H8V13Z" fill="#5a5a5a"/></svg>
<div class="a" style="left:62px;top:140px;width:1114px;height:25px;background:#333333;border:1px solid #1a1a1a;border-radius:1px"></div>
<div class="a" style="left:1157px;top:141px;width:18px;height:23px;background:#272727;"></div>
<svg class="a" style="left:1162px;top:149px;" width="8" height="6" viewBox="0 0 8 6"><path d="M0 0H8L4 6Z" fill="#777"/></svg>
<svg class="a" style="left:70px;top:144px;" width="16" height="17" viewBox="0 0 16 17"><rect x="1" y="5" width="14" height="11" fill="#6a6a6a"/><path d="M1 4L14 1L15 4Z" fill="#8a8a8a"/><rect x="3" y="9" width="5" height="4" fill="#999"/></svg>
<div class="t" style="left:89.0px;top:146.4px;font-size:12.5px;color:#c8c8c8;font-family:'Liberation Sans',sans-serif;transform:scaleX(0.899);">obj</div>
<svg class="a" style="left:112px;top:140px;" width="8" height="25" viewBox="0 0 8 25"><path d="M1 0L7 12.5L1 25" stroke="#1a1a1a" stroke-width="1.2" fill="none"/></svg>
<svg class="a" style="left:124px;top:144px;" width="18" height="17" viewBox="0 0 18 17"><path d="M2 2L7 1L8 12L3 13Z" fill="#5a80c0"/><circle cx="13" cy="9" r="4.5" fill="#c03030"/><path d="M5 16L10 7L15 16Z" fill="#e8d040"/></svg>
<div class="t" style="left:146.0px;top:146.4px;font-size:12.5px;color:#d0d0d0;font-family:'Liberation Sans',sans-serif;transform:scaleX(0.785);">PYRO_EXPLOSION</div>
<svg class="a" style="left:1183px;top:144px;" width="18" height="16" viewBox="0 0 18 16"><path d="M1 8H7M7 4H13V12H7Z M13 2V14" stroke="#ccc" stroke-width="1.8" fill="none"/></svg>
<svg class="a" style="left:1207px;top:143px;" width="19" height="19" viewBox="0 0 19 19"><circle cx="9.5" cy="9.5" r="8" fill="none" stroke="#5a78b0" stroke-width="1.5"/><circle cx="9.5" cy="9.5" r="4.5" fill="none" stroke="#5a78b0" stroke-width="1.5"/><circle cx="9.5" cy="9.5" r="1.5" fill="#5a78b0"/></svg>
<svg class="a" style="left:1242px;top:144px;" width="17" height="16" viewBox="0 0 17 16"><path d="M2 4L9 1L15 4V12L9 15L2 12Z" fill="#8a9ab0"/><path d="M2 4L9 7L15 4" stroke="#ccd" fill="none"/><path d="M12 14L15 14L13.5 16Z" fill="#777"/></svg>
<svg class="a" style="left:1265px;top:144px;" width="19" height="17" viewBox="0 0 19 17"><rect x="2" y="1" width="5" height="8" fill="#ccc"/><path d="M2 15L7 7L11 15Z" fill="#ddd"/><circle cx="12" cy="8" r="5" fill="#4a70b0"/></svg>
<div class="a" style="left:1291px;top:145px;width:14px;height:14px;background:#e0e0e0;"></div>
<div class="a" style="left:1317px;top:134px;width:603px;height:36px;background:#3a3a3a;"></div>
<svg class="a" style="left:1322px;top:143px;" width="20" height="18" viewBox="0 0 20 18"><path d="M1 8L8 2V5H15V11H8V14Z" fill="#d0d0d0"/><path d="M13 12L16 15L13 18Z" fill="#999"/></svg>
<svg class="a" style="left:1346px;top:143px;" width="16" height="14" viewBox="0 0 16 14"><path d="M15 7L8 1V4H1V10H8V13Z" fill="#5a5a5a"/></svg>
<div class="a" style="left:1373px;top:140px;width:492px;height:25px;background:#333333;border:1px solid #1a1a1a;border-radius:1px"></div>
<div class="a" style="left:1846px;top:141px;width:18px;height:23px;background:#272727;"></div>
<svg class="a" style="left:1851px;top:149px;" width="8" height="6" viewBox="0 0 8 6"><path d="M0 0H8L4 6Z" fill="#777"/></svg>
<svg class="a" style="left:1381px;top:144px;" width="16" height="17" viewBox="0 0 16 17"><rect x="1" y="5" width="14" height="11" fill="#6a6a6a"/><path d="M1 4L14 1L15 4Z" fill="#8a8a8a"/><rect x="3" y="9" width="5" height="4" fill="#999"/></svg>
<div class="t" style="left:1400.0px;top:146.4px;font-size:12.5px;color:#c8c8c8;font-family:'Liberation Sans',sans-serif;transform:scaleX(0.899);">obj</div>
<svg class="a" style="left:1423px;top:140px;" width="8" height="25" viewBox="0 0 8 25"><path d="M1 0L7 12.5L1 25" stroke="#1a1a1a" stroke-width="1.2" fill="none"/></svg>
<svg class="a" style="left:1435px;top:144px;" width="18" height="17" viewBox="0 0 18 17"><path d="M2 2L7 1L8 12L3 13Z" fill="#5a80c0"/><circle cx="13" cy="9" r="4.5" fill="#c03030"/><path d="M5 16L10 7L15 16Z" fill="#e8d040"/></svg>
<div class="t" style="left:1457.0px;top:146.4px;font-size:12.5px;color:#d0d0d0;font-family:'Liberation Sans',sans-serif;transform:scaleX(0.785);">PYRO_EXPLOSION</div>
<svg class="a" style="left:1875px;top:144px;" width="18" height="16" viewBox="0 0 18 16"><path d="M1 8H7M7 4H13V12H7Z M13 2V14" stroke="#ccc" stroke-width="1.8" fill="none"/></svg>
<svg class="a" style="left:1898px;top:143px;" width="19" height="19" viewBox="0 0 19 19"><circle cx="9.5" cy="9.5" r="8" fill="none" stroke="#5a78b0" stroke-width="1.5"/><circle cx="9.5" cy="9.5" r="4.5" fill="none" stroke="#5a78b0" stroke-width="1.5"/><circle cx="9.5" cy="9.5" r="1.5" fill="#5a78b0"/></svg>
<div class="a" style="left:6px;top:170px;width:1305px;height:34px;background:#333333;"></div>
<div class="a" style="left:6px;top:170px;width:1305px;height:1px;background:#252525;"></div>
<div class="a" style="left:6px;top:203px;width:1305px;height:1px;background:#1c1c1c;"></div>
<div class="a" style="left:9px;top:172px;width:12px;height:30px;background:#3a3a3a;border-right:1px solid #222"></div>
<svg class="a" style="left:10px;top:174px;" width="9" height="8" viewBox="0 0 9 8"><path d="M4.5 1L8 7H1Z" fill="#111"/></svg>
<svg class="a" style="left:22px;top:180px;" width="18" height="18" viewBox="0 0 18 18"><rect x="1" y="1" width="3" height="3" fill="#ddd"/><rect x="1" y="6" width="3" height="3" fill="#ddd"/><rect x="1" y="11" width="3" height="3" fill="#ddd"/><rect x="6" y="1" width="3" height="3" fill="#ddd"/><rect x="6" y="6" width="3" height="3" fill="#ddd"/><rect x="6" y="11" width="3" height="3" fill="#ddd"/><rect x="11" y="1" width="3" height="3" fill="#ddd"/><rect x="11" y="6" width="3" height="3" fill="#ddd"/><rect x="11" y="11" width="3" height="3" fill="#ddd"/><path d="M12 14L16 18L18 13Z" fill="#888"/></svg>
<svg class="a" style="left:537px;top:176px;" width="22" height="22" viewBox="0 0 22 22"><ellipse cx="9" cy="14" rx="7" ry="4" fill="none" stroke="#5a7ab8" stroke-width="2"/><path d="M8 2L8 14L11 11L14 15L15 14L12 10L16 10Z" fill="#ddd"/><path d="M14 18H20L17 21Z" fill="#999"/></svg>
<svg class="a" style="left:571px;top:176px;" width="22" height="22" viewBox="0 0 22 22"><path d="M2 5L16 13" stroke="#5a7ab8" stroke-width="2.5"/><path d="M7 2L7 14L10 11L13 15L14 14L11 10L15 10Z" fill="#ddd"/><path d="M14 18H20L17 21Z" fill="#999"/></svg>
<svg class="a" style="left:603px;top:176px;" width="22" height="22" viewBox="0 0 22 22"><path d="M2 8H14M4 15H16" stroke="#5a7ab8" stroke-width="3"/><path d="M13 2L13 12L16 9L19 13Z" fill="#ddd"/><path d="M14 18H20L17 21Z" fill="#999"/></svg>
<div class="a" style="left:629px;top:176px;width:1px;height:24px;background:#555;"></div>
<div class="a" style="left:635px;top:175px;width:21px;height:26px;background:#5a6a8a;"></div>
<svg class="a" style="left:636px;top:177px;" width="20" height="22" viewBox="0 0 20 22"><circle cx="8" cy="7" r="3" fill="none" stroke="#ddd" stroke-width="1.5"/><circle cx="13" cy="5" r="3" fill="none" stroke="#ddd" stroke-width="1.5"/><circle cx="10" cy="14" r="3" fill="none" stroke="#ddd" stroke-width="1.5"/><circle cx="16" cy="12" r="2.5" fill="none" stroke="#ddd" stroke-width="1.5"/></svg>
<div class="a" style="left:658px;top:176px;width:1px;height:24px;background:#555;"></div>
<svg class="a" style="left:662px;top:180px;" width="22" height="22" viewBox="0 0 22 22"><rect x="1" y="3" width="11" height="9" rx="2" fill="none" stroke="#ccc" stroke-width="1.5"/><rect x="4" y="5" width="5" height="5" fill="#ccc"/><path d="M11 11L15 15" stroke="#888" stroke-width="1.5"/></svg>
<div class="a" style="left:686px;top:176px;width:1px;height:24px;background:#555;"></div>
<svg class="a" style="left:693px;top:179px;" width="22" height="22" viewBox="0 0 22 22"><circle cx="9" cy="9" r="7.5" fill="none" stroke="#5a2a2a" stroke-width="1.3"/><rect x="5" y="8" width="8" height="2" fill="#5a2a2a"/></svg>
<div class="a" style="left:719px;top:176px;width:1px;height:24px;background:#555;"></div>
<svg class="a" style="left:725px;top:178px;" width="22" height="22" viewBox="0 0 22 22"><path d="M2 3L8 5M16 3L10 5M1 7L7 7M17 7L11 7" stroke="#ddd" stroke-width="1.3"/><circle cx="9" cy="12" r="5.5" fill="#bbb"/><circle cx="9" cy="12" r="2.5" fill="#4a6a98"/></svg>
<div class="a" style="left:752px;top:179px;width:15px;height:16px;background:#eeeeee;"></div>
<svg class="a" style="left:754px;top:181px;" width="11" height="12" viewBox="0 0 11 12"><circle cx="5.5" cy="6" r="2.5" fill="#111"/><path d="M5.5 0.5V11.5M0 6H11M1.5 2L9.5 10M9.5 2L1.5 10" stroke="#111" stroke-width="1.3"/></svg>
<svg class="a" style="left:1264px;top:178px;" width="20" height="22" viewBox="0 0 20 22"><circle cx="5" cy="3" r="2" fill="#8aa0c0"/><rect x="3" y="6" width="4" height="2" fill="#ccc"/><circle cx="11" cy="8" r="2" fill="#8aa0c0"/><rect x="9" y="11" width="4" height="2" fill="#ccc"/><circle cx="5" cy="12" r="2" fill="#8aa0c0"/><rect x="3" y="15" width="4" height="2" fill="#ccc"/><path d="M12 17H18L15 20Z" fill="#888"/></svg>
<svg class="a" style="left:1289px;top:177px;" width="19" height="19" viewBox="0 0 19 19"><circle cx="9.5" cy="9.5" r="7.5" fill="none" stroke="#ddd" stroke-width="1.5"/><text x="9.5" y="14" font-size="12" font-weight="bold" text-anchor="middle" fill="#ddd" font-family="Liberation Sans">?</text></svg>
<div class="a" style="left:6px;top:204px;width:35px;height:799px;background:#3a3a3a;"></div>
<div class="a" style="left:6px;top:204px;width:35px;height:1px;background:#2a2a2a;"></div>
<div class="a" style="left:8px;top:206px;width:30px;height:11px;background:#444;border:1px solid #2a2a2a"></div>
<svg class="a" style="left:9px;top:207px;" width="9" height="9" viewBox="0 0 9 9"><path d="M1 4.5L7 1V8Z" fill="#111"/></svg>
<div class="a" style="left:0px;top:204px;width:6px;height:799px;background:#383838;"></div>
<div class="a" style="left:6px;top:113px;width:1px;height:890px;background:#222;"></div>
<div class="a" style="left:10px;top:218px;width:25px;height:80px;background:#3e3e3e;border:1px solid #262626"></div>
<div class="a" style="left:11px;top:245px;width:23px;height:27px;background:#5a6a80;"></div>
<svg class="a" style="left:14px;top:222px;" width="20" height="20" viewBox="0 0 20 20"><path d="M3 17L10 4L17 17Z" fill="#e8c840"/><circle cx="13" cy="8" r="5" fill="#888"/></svg>
<svg class="a" style="left:33px;top:237px;" width="5" height="7" viewBox="0 0 5 7"><path d="M0 0L5 3.5L0 7Z" fill="#888"/></svg>
<svg class="a" style="left:14px;top:249px;" width="20" height="20" viewBox="0 0 20 20"><path d="M10 2L18 10L10 18L2 10Z" fill="#9aa8b8" stroke="#ccc" stroke-width="1"/><rect x="7" y="10" width="7" height="6" fill="#e8c840"/></svg>
<svg class="a" style="left:33px;top:264px;" width="5" height="7" viewBox="0 0 5 7"><path d="M0 0L5 3.5L0 7Z" fill="#888"/></svg>
<svg class="a" style="left:14px;top:275px;" width="20" height="20" viewBox="0 0 20 20"><path d="M3 8L12 3L18 11L9 17Z" fill="#e8c840"/><path d="M3 8L9 17" stroke="#776" stroke-width="2"/></svg>
<svg class="a" style="left:33px;top:290px;" width="5" height="7" viewBox="0 0 5 7"><path d="M0 0L5 3.5L0 7Z" fill="#888"/></svg>
<div class="a" style="left:8px;top:306px;width:30px;height:1px;background:#2a2a2a;"></div>
<svg class="a" style="left:14px;top:315px;" width="20" height="20" viewBox="0 0 20 20"><path d="M5 2V17L9 13L12 19L14 18L11 12L17 12Z" fill="#e0e0e0"/></svg>
<svg class="a" style="left:33px;top:330px;" width="5" height="7" viewBox="0 0 5 7"><path d="M0 0L5 3.5L0 7Z" fill="#888"/></svg>
<div class="a" style="left:10px;top:342px;width:26px;height:26px;background:#5f7290;"></div>
<svg class="a" style="left:14px;top:345px;" width="20" height="20" viewBox="0 0 20 20"><rect x="4" y="9" width="12" height="9" rx="1" fill="#e8e8e8"/><path d="M6 9V6a4 4 0 0 1 8 0V9" stroke="#e8e8e8" stroke-width="2" fill="none"/><rect x="9" y="12" width="2" height="3" fill="#5f7290"/></svg>
<svg class="a" style="left:14px;top:374px;" width="20" height="20" viewBox="0 0 20 20"><circle cx="10" cy="9" r="4" fill="#aaa"/><path d="M2 12L6 8L8 14Z M18 12L14 8L12 14Z M7 17L13 17L10 12Z" fill="#c03020"/></svg>
<svg class="a" style="left:14px;top:404px;" width="20" height="20" viewBox="0 0 20 20"><circle cx="10" cy="9" r="4" fill="#aaa"/><path d="M2 12L6 8L8 14Z M18 12L14 8L12 14Z M7 17L13 17L10 12Z" fill="#c03020"/></svg>
<svg class="a" style="left:14px;top:434px;" width="20" height="20" viewBox="0 0 20 20"><circle cx="10" cy="9" r="4" fill="#aaa"/><path d="M2 12L6 8L8 14Z M18 12L14 8L12 14Z M7 17L13 17L10 12Z" fill="#c03020"/></svg>
<svg class="a" style="left:14px;top:464px;" width="20" height="20" viewBox="0 0 20 20"><path d="M10 1V19M1 10H19M4 4L16 16M16 4L4 16" stroke="#ddd" stroke-width="1.2"/><circle cx="10" cy="10" r="2.5" fill="#c03020"/></svg>
<svg class="a" style="left:14px;top:495px;" width="20" height="20" viewBox="0 0 20 20"><path d="M10 2L16 14H4Z" fill="#60c040"/><circle cx="5" cy="14" r="3.5" fill="#4a70c0"/><circle cx="15" cy="14" r="3.5" fill="#c03020"/><circle cx="10" cy="13" r="2.5" fill="#e8c840"/></svg>
<svg class="a" style="left:33px;top:510px;" width="5" height="7" viewBox="0 0 5 7"><path d="M0 0L5 3.5L0 7Z" fill="#888"/></svg>
<div class="a" style="left:8px;top:523px;width:30px;height:1px;background:#2a2a2a;"></div>
<svg class="a" style="left:14px;top:534px;" width="20" height="20" viewBox="0 0 20 20"><path d="M3 10V7a6 6 0 0 1 12 0V10" stroke="#c82828" stroke-width="4" fill="none"/><rect x="1" y="9" width="5" height="4" fill="#ddd"/><rect x="12" y="9" width="5" height="4" fill="#ddd"/><rect x="9" y="9" width="9" height="8" fill="none" stroke="#ddd" stroke-width="1.2"/></svg>
<svg class="a" style="left:33px;top:549px;" width="5" height="7" viewBox="0 0 5 7"><path d="M0 0L5 3.5L0 7Z" fill="#888"/></svg>
<svg class="a" style="left:14px;top:563px;" width="20" height="20" viewBox="0 0 20 20"><path d="M3 10V7a6 6 0 0 1 12 0V10" stroke="#c82828" stroke-width="4" fill="none"/><rect x="1" y="9" width="5" height="4" fill="#ddd"/><rect x="12" y="9" width="5" height="4" fill="#ddd"/><path d="M4 18C8 14 12 16 17 11" stroke="#ddd" stroke-width="1.2" fill="none"/></svg>
<svg class="a" style="left:33px;top:578px;" width="5" height="7" viewBox="0 0 5 7"><path d="M0 0L5 3.5L0 7Z" fill="#888"/></svg>
<svg class="a" style="left:14px;top:593px;" width="20" height="20" viewBox="0 0 20 20"><path d="M3 10V7a6 6 0 0 1 12 0V10" stroke="#c82828" stroke-width="4" fill="none"/><rect x="1" y="9" width="5" height="4" fill="#ddd"/><rect x="12" y="9" width="5" height="4" fill="#ddd"/><circle cx="15" cy="15" r="3" fill="#ccc"/></svg>
<svg class="a" style="left:33px;top:608px;" width="5" height="7" viewBox="0 0 5 7"><path d="M0 0L5 3.5L0 7Z" fill="#888"/></svg>
<svg class="a" style="left:14px;top:623px;" width="20" height="20" viewBox="0 0 20 20"><path d="M3 13V8a7 7 0 0 1 14 0V13" stroke="#c82828" stroke-width="5" fill="none"/><rect x="1" y="13" width="6" height="5" fill="#ddd"/><rect x="13" y="13" width="6" height="5" fill="#ddd"/></svg>
<svg class="a" style="left:33px;top:638px;" width="5" height="7" viewBox="0 0 5 7"><path d="M0 0L5 3.5L0 7Z" fill="#888"/></svg>
<div class="a" style="left:8px;top:654px;width:30px;height:1px;background:#2a2a2a;"></div>
<div class="a" style="left:10px;top:660px;width:26px;height:26px;background:#5f7290;"></div>
<svg class="a" style="left:14px;top:663px;" width="20" height="20" viewBox="0 0 20 20"><circle cx="6" cy="7" r="4" fill="#333" stroke="#888"/><circle cx="13" cy="6" r="4" fill="#333" stroke="#888"/><rect x="3" y="10" width="12" height="8" fill="#222"/><path d="M15 12L19 10V17L15 15Z" fill="#333"/></svg>
<svg class="a" style="left:33px;top:678px;" width="5" height="7" viewBox="0 0 5 7"><path d="M0 0L5 3.5L0 7Z" fill="#888"/></svg>
<svg class="a" style="left:14px;top:692px;" width="20" height="20" viewBox="0 0 20 20"><circle cx="8" cy="8" r="7" fill="none" stroke="#ddd" stroke-width="1.3"/><path d="M8 1V15M1 8H15" stroke="#ddd" stroke-width="1"/><rect x="10" y="10" width="8" height="8" fill="#c07050"/></svg>
<svg class="a" style="left:14px;top:723px;" width="20" height="20" viewBox="0 0 20 20"><ellipse cx="10" cy="14" rx="9" ry="4" fill="#ddd"/><rect x="5" y="3" width="10" height="10" rx="3" fill="#333" stroke="#aaa"/></svg>
<svg class="a" style="left:33px;top:738px;" width="5" height="7" viewBox="0 0 5 7"><path d="M0 0L5 3.5L0 7Z" fill="#888"/></svg>
<svg class="a" style="left:14px;top:950px;" width="20" height="20" viewBox="0 0 20 20"><path d="M2 10L12 5L18 9L8 15Z" fill="#ddd"/><path d="M2 10V13L8 18V15Z" fill="#999"/></svg>
<svg class="a" style="left:33px;top:965px;" width="5" height="7" viewBox="0 0 5 7"><path d="M0 0L5 3.5L0 7Z" fill="#888"/></svg>
<svg class="a" style="left:14px;top:976px;" width="20" height="20" viewBox="0 0 20 20"><ellipse cx="10" cy="10" rx="9" ry="7" fill="#ccc"/><circle cx="6" cy="9" r="2" fill="#777"/><circle cx="14" cy="9" r="2" fill="#777"/><circle cx="10" cy="6" r="2" fill="#777"/><circle cx="10" cy="13" r="2" fill="#777"/></svg>
<svg class="a" style="left:33px;top:991px;" width="5" height="7" viewBox="0 0 5 7"><path d="M0 0L5 3.5L0 7Z" fill="#888"/></svg>
<div class="a" style="left:1285px;top:204px;width:26px;height:799px;background:#3a3a3a;"></div>
<div class="a" style="left:1287px;top:206px;width:22px;height:11px;background:#444;border:1px solid #2a2a2a"></div>
<svg class="a" style="left:1299px;top:207px;" width="9" height="9" viewBox="0 0 9 9"><path d="M8 4.5L2 1V8Z" fill="#111"/></svg>
<svg class="a" style="left:1288px;top:222px;" width="20" height="20" viewBox="0 0 20 20"><path d="M10 4L18 9L10 14L2 9Z" fill="none" stroke="#ccc" stroke-width="1.3"/><path d="M6 6.5L14 11.5M14 6.5L6 11.5" stroke="#ccc" stroke-width="0.8"/></svg>
<svg class="a" style="left:1305px;top:237px;" width="5" height="7" viewBox="0 0 5 7"><path d="M0 0L5 3.5L0 7Z" fill="#888"/></svg>
<svg class="a" style="left:1288px;top:246px;" width="20" height="20" viewBox="0 0 20 20"><path d="M3 4L15 2L17 14L5 17Z" fill="none" stroke="#80b050" stroke-width="1.5"/><circle cx="10" cy="10" r="3" fill="none" stroke="#80b050" stroke-width="1.5"/></svg>
<svg class="a" style="left:1305px;top:261px;" width="5" height="7" viewBox="0 0 5 7"><path d="M0 0L5 3.5L0 7Z" fill="#888"/></svg>
<svg class="a" style="left:1288px;top:272px;" width="20" height="20" viewBox="0 0 20 20"><rect x="4" y="9" width="12" height="9" fill="#ddd"/><path d="M6 9V6a4 4 0 0 1 8 0V9" stroke="#ddd" stroke-width="2" fill="none"/></svg>
<svg class="a" style="left:1288px;top:298px;" width="20" height="20" viewBox="0 0 20 20"><circle cx="10" cy="8" r="6" fill="none" stroke="#ccc" stroke-width="1.3"/><path d="M7 5L13 11M13 5L7 11" stroke="#ccc" stroke-width="1.2"/><path d="M8 14H12V18H8Z" fill="#aaa"/></svg>
<svg class="a" style="left:1288px;top:325px;" width="20" height="20" viewBox="0 0 20 20"><circle cx="10" cy="10" r="8" fill="#bbb"/><circle cx="12" cy="10" r="5" fill="#666"/></svg>
<svg class="a" style="left:1305px;top:340px;" width="5" height="7" viewBox="0 0 5 7"><path d="M0 0L5 3.5L0 7Z" fill="#888"/></svg>
<div class="a" style="left:1286px;top:348px;width:24px;height:26px;background:#5f7290;"></div>
<svg class="a" style="left:1288px;top:351px;" width="20" height="20" viewBox="0 0 20 20"><path d="M10 2a6 6 0 0 1 6 6c0 3-3 5-3 8H7c0-3-3-5-3-8a6 6 0 0 1 6-6Z" fill="#d8d890"/><path d="M10 5V11M7 8H13" stroke="#333" stroke-width="1.5"/></svg>
<svg class="a" style="left:1305px;top:366px;" width="5" height="7" viewBox="0 0 5 7"><path d="M0 0L5 3.5L0 7Z" fill="#888"/></svg>
<svg class="a" style="left:1288px;top:377px;" width="20" height="20" viewBox="0 0 20 20"><circle cx="10" cy="8" r="6" fill="#ddd"/><path d="M10 5V11M7 8H13" stroke="#333" stroke-width="1.5"/><ellipse cx="10" cy="16" rx="8" ry="3" fill="none" stroke="#aaa" stroke-width="1.5"/></svg>
<svg class="a" style="left:1305px;top:392px;" width="5" height="7" viewBox="0 0 5 7"><path d="M0 0L5 3.5L0 7Z" fill="#888"/></svg>
<div class="a" style="left:1286px;top:403px;width:24px;height:26px;background:#5f7290;"></div>
<svg class="a" style="left:1288px;top:406px;" width="20" height="20" viewBox="0 0 20 20"><path d="M10 2L18 6V14L10 18L2 14V6Z" fill="#ddd"/><path d="M10 2L10 18M2 6L18 14" stroke="#333" stroke-width="2"/></svg>
<svg class="a" style="left:1305px;top:421px;" width="5" height="7" viewBox="0 0 5 7"><path d="M0 0L5 3.5L0 7Z" fill="#888"/></svg>
<svg class="a" style="left:1288px;top:432px;" width="20" height="20" viewBox="0 0 20 20"><ellipse cx="10" cy="9" rx="8" ry="5" fill="none" stroke="#ddd" stroke-width="1.5"/><circle cx="10" cy="9" r="2.5" fill="#ddd"/><path d="M2 12L18 16" stroke="#ddd"/></svg>
<svg class="a" style="left:1305px;top:447px;" width="5" height="7" viewBox="0 0 5 7"><path d="M0 0L5 3.5L0 7Z" fill="#888"/></svg>
<svg class="a" style="left:1288px;top:457px;" width="20" height="20" viewBox="0 0 20 20"><ellipse cx="11" cy="7" rx="7" ry="4" fill="none" stroke="#ddd" stroke-width="1.5"/><rect x="2" y="10" width="9" height="8" fill="#bbb"/></svg>
<svg class="a" style="left:1305px;top:472px;" width="5" height="7" viewBox="0 0 5 7"><path d="M0 0L5 3.5L0 7Z" fill="#888"/></svg>
<svg class="a" style="left:1288px;top:489px;" width="20" height="20" viewBox="0 0 20 20"><circle cx="10" cy="10" r="2.5" fill="#eee"/></svg>
<svg class="a" style="left:1288px;top:517px;" width="20" height="20" viewBox="0 0 20 20"><path d="M17 3L9 12" stroke="#ccc" stroke-width="1.5"/><circle cx="7" cy="14" r="3" fill="#ddd"/></svg>
<svg class="a" style="left:1288px;top:542px;" width="20" height="20" viewBox="0 0 20 20"><path d="M4 17L13 7" stroke="#aaa" stroke-width="1.5"/><circle cx="14" cy="6" r="3.5" fill="#ddd"/></svg>
<svg class="a" style="left:1288px;top:569px;" width="20" height="20" viewBox="0 0 20 20"><circle cx="6" cy="15" r="3" fill="#ddd"/><text x="13" y="10" font-size="9" text-anchor="middle" fill="#ddd" font-family="Liberation Sans">12</text></svg>
<svg class="a" style="left:1288px;top:596px;" width="20" height="20" viewBox="0 0 20 20"><path d="M2 13L12 9L17 15L7 19Z" fill="#ccc"/><path d="M10 12L15 2" stroke="#d08040" stroke-width="1.3"/></svg>
<svg class="a" style="left:1288px;top:623px;" width="20" height="20" viewBox="0 0 20 20"><path d="M2 14L16 10L16 18Z" fill="#ccc"/><text x="13" y="9" font-size="9" text-anchor="middle" fill="#ddd" font-family="Liberation Sans">12</text></svg>
<svg class="a" style="left:1288px;top:650px;" width="20" height="20" viewBox="0 0 20 20"><path d="M4 18V9Q4 3 10 3H17" stroke="#ddd" stroke-width="1.4" fill="none"/><circle cx="4" cy="18" r="1.5" fill="#ddd"/><circle cx="17" cy="3" r="1.5" fill="#ddd"/></svg>
<div class="a" style="left:1286px;top:674px;width:24px;height:26px;background:#5f7290;"></div>
<svg class="a" style="left:1288px;top:677px;" width="20" height="20" viewBox="0 0 20 20"><path d="M3 15L12 4L17 9L8 17Z" fill="#b8c8e0"/><path d="M3 15L8 17L17 9" stroke="#8090b0" stroke-width="1" fill="none"/></svg>
<div class="a" style="left:1286px;top:701px;width:24px;height:26px;background:#5f7290;"></div>
<svg class="a" style="left:1288px;top:704px;" width="20" height="20" viewBox="0 0 20 20"><rect x="3" y="3" width="14" height="14" fill="#c0a8b8"/><path d="M3 3H7V7H3ZM11 3H15V7H11ZM7 7H11V11H7ZM3 11H7V15H3ZM11 11H15V15H11Z" fill="#e8b0b0"/><rect x="3" y="3" width="14" height="14" fill="none" stroke="#ddd" stroke-width="1"/></svg>
<svg class="a" style="left:1305px;top:719px;" width="5" height="7" viewBox="0 0 5 7"><path d="M0 0L5 3.5L0 7Z" fill="#888"/></svg>
<svg class="a" style="left:1288px;top:729px;" width="20" height="20" viewBox="0 0 20 20"><path d="M10 3L17 10L10 17L3 10Z" fill="#8aa8d0"/><path d="M10 5L15 10L10 15L5 10Z" fill="#d0d8e0"/></svg>
<svg class="a" style="left:1288px;top:755px;" width="20" height="20" viewBox="0 0 20 20"><path d="M3 5L8 3L10 5L12 3L17 5L15 10L17 15L12 17L10 15L8 17L3 15L5 10Z" fill="#9ac070"/><circle cx="10" cy="10" r="3" fill="#d8e8c0"/></svg>
<svg class="a" style="left:1288px;top:782px;" width="20" height="20" viewBox="0 0 20 20"><path d="M10 10L3 12M10 10L16 4M10 10L14 17" stroke="#ddd" stroke-width="1.5"/><circle cx="10" cy="10" r="2.5" fill="#eee"/></svg>
<svg class="a" style="left:1288px;top:809px;" width="20" height="20" viewBox="0 0 20 20"><circle cx="10" cy="10" r="7.5" fill="none" stroke="#ccc" stroke-width="1.3"/><rect x="6" y="7" width="8" height="6" fill="#ddd"/><path d="M6 10H14" stroke="#555" stroke-width="1"/></svg>
<div class="a" style="left:1286px;top:834px;width:24px;height:26px;background:#5f7290;"></div>
<svg class="a" style="left:1288px;top:837px;" width="20" height="20" viewBox="0 0 20 20"><rect x="3" y="3" width="14" height="13" fill="#ddd"/><rect x="4.5" y="4.5" width="11" height="10" fill="#333"/><path d="M5 14L9 8L12 11L15 8V14Z" fill="#ccc"/></svg>
<svg class="a" style="left:1305px;top:852px;" width="5" height="7" viewBox="0 0 5 7"><path d="M0 0L5 3.5L0 7Z" fill="#888"/></svg>
<div class="a" style="left:1288px;top:865px;width:20px;height:1px;background:#4a4a4a;"></div>
<div class="a" style="left:1286px;top:872px;width:24px;height:26px;background:#5f7290;"></div>
<svg class="a" style="left:1288px;top:875px;" width="20" height="20" viewBox="0 0 20 20"><path d="M10 2a6 6 0 0 1 6 6c0 4-6 10-6 10S4 12 4 8a6 6 0 0 1 6-6Z" fill="#e8e8e8"/><circle cx="10" cy="8" r="2.5" fill="#7a8aa0"/></svg>
<svg class="a" style="left:1305px;top:890px;" width="5" height="7" viewBox="0 0 5 7"><path d="M0 0L5 3.5L0 7Z" fill="#888"/></svg>
<div class="a" style="left:1288px;top:920px;width:20px;height:1px;background:#4a4a4a;"></div>
<svg class="a" style="left:1288px;top:927px;" width="20" height="20" viewBox="0 0 20 20"><circle cx="10" cy="10" r="7" fill="none" stroke="#ccc" stroke-width="1.3"/><text x="10" y="14" font-size="11" font-style="italic" text-anchor="middle" fill="#ccc" font-family="Liberation Serif">i</text></svg>
<div class="a" style="left:1286px;top:951px;width:24px;height:26px;background:#5f7290;"></div>
<svg class="a" style="left:1288px;top:954px;" width="20" height="20" viewBox="0 0 20 20"><rect x="3" y="3" width="6" height="6" fill="#e8d060"/><rect x="11" y="3" width="6" height="6" fill="#ccc"/><rect x="3" y="11" width="6" height="6" fill="#ccc"/><rect x="11" y="11" width="6" height="6" fill="#e8d060"/></svg>
<svg class="a" style="left:1288px;top:980px;" width="20" height="20" viewBox="0 0 20 20"><rect x="2" y="3" width="16" height="15" fill="#e8e8e8"/><path d="M3 10.5Q10 3 17 10.5Q10 16 3 10.5Z" fill="#fff" stroke="#333" stroke-width="1"/><circle cx="10" cy="10.5" r="3" fill="#111"/></svg>
<svg class="a" style="left:1305px;top:995px;" width="5" height="7" viewBox="0 0 5 7"><path d="M0 0L5 3.5L0 7Z" fill="#888"/></svg>
<svg class="a" style="left:41px;top:204px;" width="1244" height="799" viewBox="0 0 1244 799"><g transform="translate(-41,-204)">
<rect x="41" y="204" width="1244" height="799" fill="#000"/>
<defs>
<pattern id="fp" x="0" y="2" width="4" height="4" patternUnits="userSpaceOnUse">
<rect width="4" height="4" fill="#829b9b"/>
<rect x="1" y="0" width="1" height="1" fill="#b48850"/>
<rect x="3" y="0" width="1" height="1" fill="#7584b4"/>
<rect x="0" y="1" width="1" height="1" fill="#b48850"/>
<rect x="1" y="1" width="1" height="1" fill="#8ca0c4"/>
<rect x="1" y="2" width="1" height="1" fill="#8a7c5e"/>
<rect x="3" y="2" width="1" height="1" fill="#7584b4"/>
<rect x="2" y="3" width="1" height="1" fill="#b48850"/>
</pattern>
<pattern id="rf" x="0" y="0" width="4" height="4" patternUnits="userSpaceOnUse">
<rect width="4" height="4" fill="#96acac"/>
<rect x="1" y="0" width="1" height="1" fill="#7d9696"/>
<rect x="3" y="0" width="1" height="1" fill="#8796b9"/>
<rect x="1" y="1" width="1" height="1" fill="#d2968c"/>
<rect x="3" y="1" width="1" height="1" fill="#c3afa5"/>
<rect x="2" y="2" width="1" height="1" fill="#d2968c"/>
<rect x="3" y="2" width="1" height="1" fill="#7d9696"/>
<rect x="1" y="3" width="1" height="1" fill="#c3afa5"/>
<rect x="3" y="3" width="1" height="1" fill="#c3afa5"/>
</pattern>
<linearGradient id="flr" gradientUnits="userSpaceOnUse" x1="300" y1="620" x2="1100" y2="1000"><stop offset="0" stop-color="#989b9c"/><stop offset="1" stop-color="#8d9397"/></linearGradient>
<radialGradient id="shd" cx="0.5" cy="0.5" r="0.5"><stop offset="0" stop-color="#85898c"/><stop offset="1" stop-color="#93989c" stop-opacity="0"/></radialGradient>
<linearGradient id="arch" x1="0" y1="0" x2="1" y2="0"><stop offset="0" stop-color="#202020"/><stop offset="1" stop-color="#777"/></linearGradient>
</defs>
<polygon points="41,664 852,603 1285,661 1285,1003 41,1003" fill="url(#flr)"/>
<ellipse cx="840" cy="790" rx="70" ry="25" fill="url(#shd)" opacity="0.5"/>
<!-- lower shaft -->
<polygon points="628,420 701,420 701,798 629,773" fill="#6a6a6a"/>
<polygon points="701,420 809,420 806,782 701,798" fill="#a0a3a4"/>
<path d="M638,435 L638,765 L700,787" stroke="#a8abad" stroke-width="2" fill="none"/>
<path d="M794,435 L794,770" stroke="#6a6c6e" stroke-width="2" fill="none"/>
<path d="M715,780 L793,768" stroke="#b0b3b5" stroke-width="1" fill="none"/>
<!-- middle cornice -->
<polygon points="620,372 701,372 701,420 618,420 610,413 607,410 607,398 610,393 618,387 625,387 625,378 620,378" fill="#6a6a6a"/>
<polygon points="701,372 818,372 818,378 814,378 814,387 822,387 822,393 829,393 832,398 832,410 829,413 820,420 701,420" fill="#a0a3a4"/>
<rect x="618" y="413" width="83" height="8" fill="#585858"/>
<rect x="701" y="411" width="119" height="7" fill="#a2a5a6"/>
<line x1="625" y1="378" x2="701" y2="378" stroke="#4a4a4a" stroke-width="1"/>
<!-- upper belfry -->
<polygon points="634,256 701,252 701,372 634,372" fill="#6a6a6a"/>
<polygon points="701,252 805,252 805,372 701,372" fill="#a0a3a4"/>
<!-- left arch opening -->
<linearGradient id="lcrown" gradientUnits="userSpaceOnUse" x1="0" y1="263" x2="0" y2="284"><stop offset="0" stop-color="#060606"/><stop offset="0.4" stop-color="#202020"/><stop offset="1" stop-color="#a2a5a6"/></linearGradient>
<path d="M651,361 L651,290 Q651,275 659,270 Q667,261 675,266 Q680,272 680,290 L680,361 Z" fill="url(#lcrown)"/>
<path d="M673,258 Q684,266 685,286 L685,361" stroke="#a8abac" stroke-width="3" fill="none"/>
<rect x="680" y="289" width="2.2" height="70" fill="#151515"/>
<!-- right arch opening -->
<linearGradient id="rcrown" gradientUnits="userSpaceOnUse" x1="0" y1="272" x2="0" y2="292"><stop offset="0" stop-color="#0a0a0a"/><stop offset="1" stop-color="#a2a5a6"/></linearGradient>
<linearGradient id="rwall" gradientUnits="userSpaceOnUse" x1="0" y1="280" x2="0" y2="312"><stop offset="0" stop-color="#0a0a0a"/><stop offset="1" stop-color="#6e6e6e"/></linearGradient>
<path d="M733,361 L733,284 Q736,262 757,261 Q778,263 778,290 L778,359 Z" fill="#050505"/>
<path d="M759,359 L759,296 Q764,283 778,290 L778,359 Z" fill="url(#rwall)"/>
<path d="M733,361 L733,285 Q737,272 745,274 Q753,277 754,287 L754,361 Z" fill="url(#rcrown)"/>
<path d="M731.5,361 L731.5,283 Q733,262 757,259.5 Q779,262 780,286" stroke="#aeb1b2" stroke-width="3" fill="none"/>
<path d="M730,361 L730,283 Q731,259 757,258" stroke="#76797a" stroke-width="0.9" fill="none"/>
<!-- top cornice / roof -->
<polygon points="661,213 701,212 701,256 634,256 628,250 620,243 631,228 660,219" fill="#6e6e6e"/>
<polygon points="620,243 701,232 701,256 634,256" fill="#5e5e5e"/>
<line x1="622" y1="242" x2="701" y2="230" stroke="#3a3a3a" stroke-width="1"/>
<polygon points="701,212 780,213 781,219 808,222 810,230 819,238 805,252 701,252" fill="#a2a5a6"/>
<line x1="701" y1="230" x2="819" y2="238" stroke="#7a7c7e" stroke-width="1"/>
<polygon points="665,204 701,204 701,213 665,213" fill="#6a6a6a"/>
<polygon points="701,204 773,204 775,213 701,213" fill="#a2a5a6"/>
<ellipse cx="727" cy="205" rx="8" ry="2" fill="#c8cacc"/>
</g></svg>
<svg class="a" style="left:57px;top:222px;" width="22" height="20" viewBox="0 0 22 20"><circle cx="7" cy="6" r="4" fill="#2a2a2a" stroke="#777" stroke-width="1.2"/><circle cx="14" cy="5" r="3.5" fill="#2a2a2a" stroke="#777" stroke-width="1.2"/><rect x="4" y="9" width="11" height="8" fill="#444"/><path d="M15 11L20 9V17L15 15Z" fill="#555"/></svg>
<div class="t" style="left:91.0px;top:225.6px;font-size:14px;color:#f0f0f0;font-family:'Liberation Sans',sans-serif;font-weight:bold;transform:scaleX(0.979);">View</div>
<div class="a" style="left:1160px;top:209px;width:50px;height:23px;border:1.5px solid #6a6a6a;border-radius:12px;background:#0a0a0a"></div>
<div class="t" style="left:1167.0px;top:214.3px;font-size:12px;color:#d0d0d0;font-family:'Liberation Sans',sans-serif;transform:scaleX(0.861);">Persp</div>
<svg class="a" style="left:1196px;top:218px;" width="8" height="5" viewBox="0 0 8 5"><path d="M0 0H8L4 5Z" fill="#ccc"/></svg>
<div class="a" style="left:1218px;top:209px;width:61px;height:23px;border:1.5px solid #6a6a6a;border-radius:12px;background:#0a0a0a"></div>
<div class="t" style="left:1226.0px;top:214.3px;font-size:12px;color:#d0d0d0;font-family:'Liberation Sans',sans-serif;transform:scaleX(0.919);">No cam</div>
<svg class="a" style="left:1265px;top:218px;" width="8" height="5" viewBox="0 0 8 5"><path d="M0 0H8L4 5Z" fill="#ccc"/></svg>
<div class="a" style="left:171px;top:976px;width:983px;height:23px;background:#2b2b2b;"></div>
<div class="t" style="left:175.0px;top:981.3px;font-size:12px;color:#d8d8d8;font-family:'Liberation Sans',sans-serif;transform:scaleX(0.922);">Left mouse tumbles. Middle pans. Right dollies. Ctrl+Alt+Left box-zooms. Ctrl+Right zooms. Spacebar-Ctrl-Left tilts. Hold L for alternate tumble, dolly, and zoom. M or Alt+M for First Person Navigation.</div>
<svg class="a" style="left:50px;top:965px;" width="30" height="25" viewBox="0 0 30 25"><path d="M7 20V6" stroke="#9ad070" stroke-width="1.2"/><path d="M7 20L22 13" stroke="#d060d0" stroke-width="1.2"/><path d="M7 20L14 22" stroke="#5a80d0" stroke-width="1"/><text x="9" y="7" font-size="7" fill="#9ad070" font-family="Liberation Sans">y</text></svg>
<svg class="a" style="left:790px;top:686px;" width="22" height="22" viewBox="0 0 22 22"><path d="M11 1L14 5H12V9H10V5H8Z M11 21L14 17H12V13H10V17H8Z M1 11L5 8V10H9V12H5V14Z M21 11L17 8V10H13V12H17V14Z" fill="#fff" stroke="#222" stroke-width="0.8"/></svg>
<div class="a" style="left:1317px;top:170px;width:603px;height:383px;background:#3a3a3a;"></div>
<div class="a" style="left:1317px;top:170px;width:603px;height:29px;background:#393939;"></div>
<div class="a" style="left:1317px;top:198px;width:603px;height:2px;background:#222;"></div>
<div class="a" style="left:1317px;top:168px;width:603px;height:2px;background:#222;"></div>
<svg class="a" style="left:1324px;top:176px;" width="20" height="20" viewBox="0 0 20 20"><circle cx="6" cy="12" r="4.5" fill="#d88a30"/><circle cx="14" cy="12" r="4.5" fill="#d88a30"/><circle cx="10" cy="8" r="5" fill="#e8a040"/><circle cx="10" cy="13" r="4.5" fill="#f0b050"/><path d="M10 1L11 5H9Z" fill="#e8a040"/><circle cx="9" cy="10" r="2" fill="#f8d890"/><path d="M12 17H17L14.5 20Z" fill="#888"/></svg>
<div class="t" style="left:1345.0px;top:178.9px;font-size:12.5px;color:#e0e0e0;font-family:'Liberation Sans',sans-serif;font-weight:bold;transform:scaleX(0.847);">Pyro Burst Source</div>
<div class="a" style="left:1443px;top:176px;width:341px;height:21px;background:#141414;"></div>
<div class="t" style="left:1446.0px;top:179.2px;font-size:13px;color:#e8e8e8;font-family:'Liberation Mono',monospace;transform:scaleX(0.897);">pyroburstsource1</div>
<svg class="a" style="left:1792px;top:175px;" width="20" height="22" viewBox="0 0 20 22"><circle cx="10" cy="10" r="4" fill="none" stroke="#ddd" stroke-width="2.5"/><path d="M10 2V18M2 10H18M4 4L16 16M16 4L4 16" stroke="#ddd" stroke-width="2"/><path d="M14 18H19L16.5 21Z" fill="#888"/></svg>
<svg class="a" style="left:1819px;top:175px;" width="20" height="22" viewBox="0 0 20 22"><path d="M2 16C4 10 10 10 10 13C8 16 4 17 2 16Z" fill="#bbb"/><path d="M9 11L17 3" stroke="#bbb" stroke-width="2"/><path d="M14 18H19L16.5 21Z" fill="#888"/></svg>
<svg class="a" style="left:1844px;top:175px;" width="20" height="22" viewBox="0 0 20 22"><circle cx="8" cy="8" r="5.5" fill="none" stroke="#ddd" stroke-width="2"/><path d="M12 12L17 17" stroke="#ddd" stroke-width="2.5"/></svg>
<svg class="a" style="left:1870px;top:175px;" width="20" height="22" viewBox="0 0 20 22"><circle cx="10" cy="10" r="7.5" fill="none" stroke="#ddd" stroke-width="1.5"/><text x="10" y="14.5" font-size="12" font-style="italic" font-weight="bold" text-anchor="middle" fill="#ddd" font-family="Liberation Serif">i</text></svg>
<svg class="a" style="left:1896px;top:175px;" width="20" height="22" viewBox="0 0 20 22"><circle cx="10" cy="10" r="7.5" fill="none" stroke="#ddd" stroke-width="1.5"/><text x="10" y="14.5" font-size="12" font-weight="bold" text-anchor="middle" fill="#ddd" font-family="Liberation Sans">?</text></svg>
<div class="a" style="left:1904px;top:201px;width:8px;height:350px;background:#333;"></div>
<div class="a" style="left:1905px;top:201px;width:6px;height:164px;background:#4a4a4a;"></div>
<div class="a" style="left:1320px;top:201px;width:584px;height:27px;background:#484848;"></div>
<div class="t" style="left:1340.0px;top:208.4px;font-size:12px;color:#c8c8c8;font-family:'Liberation Sans',sans-serif;transform:scaleX(0.890);">General</div>
<div class="t" style="left:1424.0px;top:239.8px;font-size:12px;color:#c8c8c8;font-family:'Liberation Sans',sans-serif;transform:scaleX(0.989);">Group</div>
<div class="a" style="left:1473px;top:235px;width:375px;height:22px;background:#171717;"></div>
<div class="a" style="left:1850px;top:235px;width:19px;height:22px;background:#3e3e3e;border:1px solid #2a2a2a"></div>
<svg class="a" style="left:1856px;top:243px;" width="7" height="5" viewBox="0 0 7 5"><path d="M0 0H7L3.5 5Z" fill="#999"/></svg>
<svg class="a" style="left:1875px;top:237px;" width="16" height="18" viewBox="0 0 16 18"><path d="M2 1L15 9L8 10L5 17Z" fill="#ddd"/></svg>
<div class="t" style="left:1390.0px;top:267.8px;font-size:12px;color:#c8c8c8;font-family:'Liberation Sans',sans-serif;transform:scaleX(0.897);">Guide Display</div>
<div class="a" style="left:1473px;top:262px;width:109px;height:22px;background:linear-gradient(#4c4c4c,#404040);border:1px solid #262626;border-radius:2px"></div>
<div class="a" style="left:1559px;top:263px;width:22px;height:20px;background:#3a3a3a;"></div>
<svg class="a" style="left:1566px;top:266px;" width="8" height="14" viewBox="0 0 8 14"><path d="M4 0L8 5H0Z M4 14L8 9H0Z" fill="#999"/></svg>
<div class="t" style="left:1486.0px;top:267.3px;font-size:12px;color:#d0d0d0;font-family:'Liberation Sans',sans-serif;transform:scaleX(0.941);">None</div>
<div class="a" style="left:1605px;top:262px;width:147px;height:22px;background:linear-gradient(#4c4c4c,#404040);border:1px solid #262626;border-radius:2px"></div>
<div class="a" style="left:1729px;top:263px;width:22px;height:20px;background:#3a3a3a;"></div>
<svg class="a" style="left:1736px;top:266px;" width="8" height="14" viewBox="0 0 8 14"><path d="M4 0L8 5H0Z M4 14L8 9H0Z" fill="#999"/></svg>
<div class="t" style="left:1618.0px;top:267.3px;font-size:12px;color:#d0d0d0;font-family:'Liberation Sans',sans-serif;transform:scaleX(0.911);">Quick Setups</div>
<svg class="a" style="left:1713px;top:268px;" width="8" height="10" viewBox="0 0 8 10"><path d="M4 0V9M1 6L4 9L7 6" stroke="#bbb" stroke-width="1.2" fill="none"/></svg>
<div class="a" style="left:1774px;top:262px;width:119px;height:22px;background:linear-gradient(#4c4c4c,#404040);border:1px solid #262626;border-radius:2px"></div>
<div class="a" style="left:1870px;top:263px;width:22px;height:20px;background:#3a3a3a;"></div>
<svg class="a" style="left:1877px;top:266px;" width="8" height="14" viewBox="0 0 8 14"><path d="M4 0L8 5H0Z M4 14L8 9H0Z" fill="#999"/></svg>
<div class="t" style="left:1787.0px;top:267.3px;font-size:12px;color:#d0d0d0;font-family:'Liberation Sans',sans-serif;transform:scaleX(0.969);">Initialize</div>
<svg class="a" style="left:1854px;top:268px;" width="8" height="10" viewBox="0 0 8 10"><path d="M4 0V9M1 6L4 9L7 6" stroke="#bbb" stroke-width="1.2" fill="none"/></svg>
<div class="a" style="left:1337px;top:294px;width:13px;height:13px;background:#151515;border:1px solid #2a2a2a"></div>
<div class="t" style="left:1370.0px;top:293.8px;font-size:12px;color:#8a8a8a;font-family:'Liberation Sans',sans-serif;transform:scaleX(0.925);">Additional Guides</div>
<div class="a" style="left:1473px;top:289px;width:397px;height:24px;background:#333333;"></div>
<svg class="a" style="left:1875px;top:291px;" width="18" height="20" viewBox="0 0 18 20"><path d="M2 6H16M9 2V12M12 14L16 18" stroke="#666" stroke-width="2" fill="none"/></svg>
<div class="t" style="left:1367.0px;top:323.2px;font-size:12px;color:#c8c8c8;font-family:'Liberation Sans',sans-serif;transform:scaleX(0.924);">Randomization By</div>
<div class="a" style="left:1473px;top:317px;width:119px;height:21px;background:linear-gradient(#4c4c4c,#404040);border:1px solid #262626;border-radius:2px"></div>
<div class="a" style="left:1569px;top:318px;width:22px;height:19px;background:#3a3a3a;"></div>
<svg class="a" style="left:1576px;top:321px;" width="8" height="14" viewBox="0 0 8 14"><path d="M4 0L8 5H0Z M4 14L8 9H0Z" fill="#999"/></svg>
<div class="t" style="left:1486.0px;top:322.3px;font-size:12px;color:#d0d0d0;font-family:'Liberation Sans',sans-serif;transform:scaleX(0.927);">Point Number</div>
<svg class="a" style="left:1875px;top:320px;" width="16" height="16" viewBox="0 0 16 16"><rect x="1" y="2" width="13" height="13" rx="3" fill="#ddd"/><circle cx="5" cy="6" r="1.3" fill="#333"/><circle cx="10" cy="6" r="1.3" fill="#333"/><circle cx="5" cy="11" r="1.3" fill="#333"/><circle cx="10" cy="11" r="1.3" fill="#333"/><circle cx="7.5" cy="8.5" r="1.3" fill="#333"/></svg>
<div class="a" style="left:1320px;top:371px;width:584px;height:182px;background:#373737;"></div>
<div class="a" style="left:1320px;top:350px;width:79px;height:21px;background:#333333;border:1px solid #262626;"></div>
<div class="t" style="left:1327.0px;top:355.8px;font-size:12px;color:#d4d4d4;font-family:'Liberation Sans',sans-serif;font-weight:bold;transform:scaleX(0.905);">Burst Shape</div>
<div class="a" style="left:1399px;top:350px;width:96px;height:21px;background:#333333;border:1px solid #262626;"></div>
<div class="t" style="left:1406.0px;top:355.8px;font-size:12px;color:#c0c0c0;font-family:'Liberation Sans',sans-serif;transform:scaleX(0.952);">Burst Animation</div>
<div class="a" style="left:1495px;top:350px;width:111px;height:22px;background:#383838;border:1px solid #262626;border-bottom:none;"></div>
<div class="t" style="left:1502.0px;top:355.8px;font-size:12px;color:#d4d4d4;font-family:'Liberation Sans',sans-serif;font-weight:bold;transform:scaleX(0.898);">Burst Components</div>
<div class="a" style="left:1606px;top:350px;width:103px;height:21px;background:#333333;border:1px solid #262626;"></div>
<div class="t" style="left:1614.0px;top:355.8px;font-size:12px;color:#c0c0c0;font-family:'Liberation Sans',sans-serif;transform:scaleX(0.973);">Output Attributes</div>
<div class="a" style="left:1327px;top:380px;width:577px;height:23px;background:#474747;"></div>
<div class="t" style="left:1347.0px;top:385.8px;font-size:12px;color:#c8c8c8;font-family:'Liberation Sans',sans-serif;transform:scaleX(0.899);">Source Value</div>
<div class="t" style="left:1391.0px;top:415.8px;font-size:12px;color:#c8c8c8;font-family:'Liberation Sans',sans-serif;transform:scaleX(0.928);">Default Value</div>
<div class="a" style="left:1473px;top:411px;width:72px;height:22px;background:#171717;"></div>
<div class="t" style="left:1477.0px;top:415.8px;font-size:12px;color:#e0e0e0;font-family:'Liberation Sans',sans-serif;">1</div>
<div class="a" style="left:1550px;top:419px;width:344px;height:5px;background:#111;border-radius:3px"></div>
<div class="a" style="left:1551px;top:420px;width:33px;height:3px;background:#4a78c0;"></div>
<div class="a" style="left:1582px;top:410px;width:7px;height:23px;background:linear-gradient(90deg,#aaa,#777);border:1px solid #333"></div>
<div class="a" style="left:1474px;top:440px;width:13px;height:13px;background:#1c1c1c;border:1px solid #2e2e2e"></div>
<div class="t" style="left:1493.0px;top:439.8px;font-size:12px;color:#c8c8c8;font-family:'Liberation Sans',sans-serif;transform:scaleX(0.898);">Scale Over Duration</div>
<div class="a" style="left:1474px;top:462px;width:13px;height:13px;background:#1c1c1c;border:1px solid #2e2e2e"></div>
<div class="t" style="left:1493.0px;top:461.8px;font-size:12px;color:#c8c8c8;font-family:'Liberation Sans',sans-serif;transform:scaleX(0.920);">Scale Along Trailing</div>
<div class="a" style="left:1327px;top:485px;width:577px;height:26px;background:#474747;"></div>
<div class="t" style="left:1347.0px;top:492.8px;font-size:12px;color:#d0d0d0;font-family:'Liberation Sans',sans-serif;font-weight:bold;transform:scaleX(0.879);">Pyro Sources</div>
<div class="t" style="left:1363.0px;top:523.8px;font-size:12px;color:#c8c8c8;font-family:'Liberation Sans',sans-serif;transform:scaleX(0.909);">Number of Sources</div>
<div class="a" style="left:1473px;top:519px;width:135px;height:22px;background:#171717;"></div>
<div class="t" style="left:1477.0px;top:524.3px;font-size:12px;color:#e8e8e8;font-family:'Liberation Sans',sans-serif;font-weight:bold;">3</div>
<div class="a" style="left:1609px;top:519px;width:17px;height:22px;background:#444;border:1px solid #2a2a2a"></div>
<div class="a" style="left:1626px;top:519px;width:17px;height:22px;background:#444;border:1px solid #2a2a2a"></div>
<svg class="a" style="left:1612px;top:525px;" width="10" height="10" viewBox="0 0 10 10"><path d="M5 0V10M0 5H10" stroke="#ccc" stroke-width="1.5"/></svg>
<svg class="a" style="left:1630px;top:529px;" width="9" height="2" viewBox="0 0 9 2"><path d="M0 1H9" stroke="#ccc" stroke-width="1.5"/></svg>
<div class="a" style="left:1645px;top:517px;width:59px;height:22px;background:linear-gradient(#4c4c4c,#404040);border:1px solid #262626;border-radius:2px"></div>
<div class="t" style="left:1661.0px;top:521.8px;font-size:12px;color:#d0d0d0;font-family:'Liberation Sans',sans-serif;transform:scaleX(0.907);">Clear</div>
<div class="a" style="left:1336px;top:542px;width:21px;height:12px;background:#3a3a3a;border:1px solid #1e1e1e;border-bottom:none"></div>
<div class="a" style="left:1357px;top:542px;width:21px;height:12px;background:#3a3a3a;border:1px solid #1e1e1e;border-bottom:none"></div>
<div class="a" style="left:1378px;top:542px;width:21px;height:12px;background:#3a3a3a;border:1px solid #1e1e1e;border-bottom:none"></div>
<div class="a" style="left:1905px;top:515px;width:6px;height:34px;background:#4a4a4a;"></div>
<svg class="a" style="left:1905px;top:525px;" width="6" height="5" viewBox="0 0 6 5"><path d="M0 0H6L3 5Z" fill="#777"/></svg>
<div class="a" style="left:1317px;top:553px;width:603px;height:9px;background:#333;"></div>
<div class="a" style="left:1320px;top:555px;width:595px;height:7px;background:#474747;"></div>
<div class="a" style="left:1317px;top:562px;width:603px;height:21px;background:#262626;"></div>
<div class="a" style="left:1317px;top:562px;width:130px;height:21px;background:#3a3a3a;"></div>
<div class="t" style="left:1324.0px;top:567.8px;font-size:11.5px;color:#b8b8b8;font-family:'Liberation Sans',sans-serif;font-style:italic;transform:scaleX(0.778);">/obj/PYRO_EXPLOSION</div>
<svg class="a" style="left:1435px;top:570px;" width="6" height="6" viewBox="0 0 6 6"><path d="M1 1L5 5M5 1L1 5" stroke="#b8b8b8" stroke-width="1.4"/></svg>
<div class="a" style="left:1448px;top:563px;width:76px;height:19px;background:#2c2c2c;border:1px solid #1e1e1e;border-bottom:none"></div>
<div class="t" style="left:1455.0px;top:567.8px;font-size:11.5px;color:#bfbfbf;font-family:'Liberation Sans',sans-serif;transform:scaleX(0.841);">Tree View</div>
<svg class="a" style="left:1512px;top:570px;" width="6" height="6" viewBox="0 0 6 6"><path d="M1 1L5 5M5 1L1 5" stroke="#b8b8b8" stroke-width="1.4"/></svg>
<div class="a" style="left:1525px;top:563px;width:101px;height:19px;background:#2c2c2c;border:1px solid #1e1e1e;border-bottom:none"></div>
<div class="t" style="left:1532.0px;top:567.8px;font-size:11.5px;color:#bfbfbf;font-family:'Liberation Sans',sans-serif;transform:scaleX(0.876);">Material Palette</div>
<svg class="a" style="left:1614px;top:570px;" width="6" height="6" viewBox="0 0 6 6"><path d="M1 1L5 5M5 1L1 5" stroke="#b8b8b8" stroke-width="1.4"/></svg>
<div class="a" style="left:1627px;top:563px;width:93px;height:19px;background:#2c2c2c;border:1px solid #1e1e1e;border-bottom:none"></div>
<div class="t" style="left:1633.0px;top:567.8px;font-size:11.5px;color:#bfbfbf;font-family:'Liberation Sans',sans-serif;transform:scaleX(0.850);">Asset Browser</div>
<svg class="a" style="left:1708px;top:570px;" width="6" height="6" viewBox="0 0 6 6"><path d="M1 1L5 5M5 1L1 5" stroke="#b8b8b8" stroke-width="1.4"/></svg>
<svg class="a" style="left:1729px;top:567px;" width="11" height="11" viewBox="0 0 11 11"><path d="M5.5 0V11M0 5.5H11" stroke="#ccc" stroke-width="2"/></svg>
<div class="a" style="left:1886px;top:568px;width:13px;height:12px;background:#d8d8d8;"></div>
<svg class="a" style="left:1906px;top:569px;" width="9" height="7" viewBox="0 0 9 7"><path d="M0 0H9L4.5 7Z" fill="#ccc"/></svg>
<div class="a" style="left:1317px;top:583px;width:603px;height:36px;background:#3a3a3a;"></div>
<svg class="a" style="left:1322px;top:592px;" width="20" height="18" viewBox="0 0 20 18"><path d="M1 8L8 2V5H15V11H8V14Z" fill="#d0d0d0"/><path d="M13 12L16 15L13 18Z" fill="#999"/></svg>
<svg class="a" style="left:1346px;top:592px;" width="16" height="14" viewBox="0 0 16 14"><path d="M15 7L8 1V4H1V10H8V13Z" fill="#5a5a5a"/></svg>
<div class="a" style="left:1373px;top:589px;width:492px;height:24px;background:#333333;border:1px solid #1a1a1a;border-radius:1px"></div>
<div class="a" style="left:1846px;top:590px;width:18px;height:22px;background:#272727;"></div>
<svg class="a" style="left:1851px;top:598px;" width="8" height="6" viewBox="0 0 8 6"><path d="M0 0H8L4 6Z" fill="#777"/></svg>
<svg class="a" style="left:1381px;top:593px;" width="16" height="17" viewBox="0 0 16 17"><rect x="1" y="5" width="14" height="11" fill="#6a6a6a"/><path d="M1 4L14 1L15 4Z" fill="#8a8a8a"/><rect x="3" y="9" width="5" height="4" fill="#999"/></svg>
<div class="t" style="left:1400.0px;top:595.4px;font-size:12.5px;color:#c8c8c8;font-family:'Liberation Sans',sans-serif;transform:scaleX(0.899);">obj</div>
<svg class="a" style="left:1423px;top:589px;" width="8" height="24" viewBox="0 0 8 24"><path d="M1 0L7 12.0L1 24" stroke="#1a1a1a" stroke-width="1.2" fill="none"/></svg>
<svg class="a" style="left:1435px;top:593px;" width="18" height="17" viewBox="0 0 18 17"><path d="M2 2L7 1L8 12L3 13Z" fill="#5a80c0"/><circle cx="13" cy="9" r="4.5" fill="#c03030"/><path d="M5 16L10 7L15 16Z" fill="#e8d040"/></svg>
<div class="t" style="left:1457.0px;top:595.4px;font-size:12.5px;color:#d0d0d0;font-family:'Liberation Sans',sans-serif;transform:scaleX(0.785);">PYRO_EXPLOSION</div>
<svg class="a" style="left:1875px;top:593px;" width="18" height="16" viewBox="0 0 18 16"><path d="M1 8H7M7 4H13V12H7Z M13 2V14" stroke="#ccc" stroke-width="1.8" fill="none"/></svg>
<svg class="a" style="left:1898px;top:592px;" width="19" height="19" viewBox="0 0 19 19"><circle cx="9.5" cy="9.5" r="8" fill="none" stroke="#5a78b0" stroke-width="1.5"/><circle cx="9.5" cy="9.5" r="4.5" fill="none" stroke="#5a78b0" stroke-width="1.5"/><circle cx="9.5" cy="9.5" r="1.5" fill="#5a78b0"/></svg>
<div class="a" style="left:1317px;top:619px;width:603px;height:27px;background:#333333;"></div>
<div class="a" style="left:1317px;top:619px;width:603px;height:1px;background:#1e1e1e;"></div>
<div class="a" style="left:1317px;top:645px;width:603px;height:1px;background:#1e1e1e;"></div>
<div class="a" style="left:1321px;top:620px;width:12px;height:25px;background:#3a3a3a;border-right:1px solid #222"></div>
<svg class="a" style="left:1322px;top:622px;" width="9" height="8" viewBox="0 0 9 8"><path d="M4.5 1L8 7H1Z" fill="#111"/></svg>
<div class="t" style="left:1337.0px;top:626.5px;font-size:13px;color:#c8c8c8;font-family:'Liberation Sans',sans-serif;transform:scaleX(0.908);">Add</div>
<div class="t" style="left:1372.0px;top:626.5px;font-size:13px;color:#c8c8c8;font-family:'Liberation Sans',sans-serif;transform:scaleX(0.982);">Edit</div>
<div class="t" style="left:1408.0px;top:626.5px;font-size:13px;color:#c8c8c8;font-family:'Liberation Sans',sans-serif;transform:scaleX(0.923);">Go</div>
<div class="t" style="left:1438.0px;top:626.5px;font-size:13px;color:#c8c8c8;font-family:'Liberation Sans',sans-serif;transform:scaleX(0.930);">View</div>
<div class="t" style="left:1479.0px;top:626.5px;font-size:13px;color:#c8c8c8;font-family:'Liberation Sans',sans-serif;transform:scaleX(0.956);">Tools</div>
<div class="t" style="left:1522.0px;top:626.5px;font-size:13px;color:#c8c8c8;font-family:'Liberation Sans',sans-serif;transform:scaleX(0.948);">Layout</div>
<div class="t" style="left:1572.0px;top:626.5px;font-size:13px;color:#c8c8c8;font-family:'Liberation Sans',sans-serif;transform:scaleX(0.887);">Labs</div>
<div class="t" style="left:1609.0px;top:626.5px;font-size:13px;color:#c8c8c8;font-family:'Liberation Sans',sans-serif;transform:scaleX(0.972);">Help</div>
<svg class="a" style="left:1647px;top:623px;" width="18" height="19" viewBox="0 0 18 19"><path d="M2 16L16 2M2 2L8 8M10 10L16 16" stroke="#ddd" stroke-width="2.2"/><circle cx="14" cy="4" r="3" fill="none" stroke="#ddd" stroke-width="1.5"/></svg>
<svg class="a" style="left:1671px;top:623px;" width="18" height="19" viewBox="0 0 18 19"><path d="M4 2V16H14M4 7H14M8 7V12H14" stroke="#ccc" stroke-width="1.5" fill="none"/></svg>
<svg class="a" style="left:1695px;top:623px;" width="18" height="19" viewBox="0 0 18 19"><rect x="3" y="2" width="12" height="15" fill="#ddd"/><path d="M3 6H15M3 10H15M3 14H15" stroke="#888" stroke-width="1"/></svg>
<div class="a" style="left:1720px;top:621px;width:22px;height:23px;background:#5f7290;"></div>
<svg class="a" style="left:1722px;top:623px;" width="18" height="19" viewBox="0 0 18 19"><rect x="3" y="3" width="3" height="3" fill="#e04040"/><rect x="3" y="7" width="3" height="3" fill="#40c040"/><rect x="3" y="11" width="3" height="3" fill="#4070e0"/><rect x="7" y="3" width="3" height="3" fill="#e0c040"/><rect x="7" y="7" width="3" height="3" fill="#ddd"/><rect x="7" y="11" width="3" height="3" fill="#e07030"/><rect x="11" y="3" width="3" height="3" fill="#c040c0"/><rect x="11" y="7" width="3" height="3" fill="#40c0c0"/><rect x="11" y="11" width="3" height="3" fill="#ddd"/></svg>
<svg class="a" style="left:1746px;top:623px;" width="18" height="19" viewBox="0 0 18 19"><rect x="2" y="2" width="14" height="15" fill="none" stroke="#ccc" stroke-width="1.3"/><path d="M6 6H8M11 6H13M6 11H8M11 11H13" stroke="#ccc" stroke-width="2"/></svg>
<svg class="a" style="left:1774px;top:623px;" width="18" height="19" viewBox="0 0 18 19"><rect x="2" y="3" width="10" height="6" fill="#ddd"/><rect x="6" y="10" width="10" height="6" fill="#ddd"/><path d="M4 5H10M8 12H14" stroke="#333"/></svg>
<svg class="a" style="left:1798px;top:623px;" width="18" height="19" viewBox="0 0 18 19"><path d="M2 3H16V13L12 17H2Z" fill="#f0d040"/><path d="M5 7H13M5 10H11" stroke="#886" stroke-width="1.2"/></svg>
<svg class="a" style="left:1822px;top:623px;" width="18" height="19" viewBox="0 0 18 19"><rect x="2" y="2" width="14" height="13" fill="#7aa8e0"/><path d="M3 13L8 7L13 13Z" fill="#70b050"/><path d="M13 14V19M10.5 16.5H15.5" stroke="#fff" stroke-width="1.5"/></svg>
<svg class="a" style="left:1847px;top:623px;" width="18" height="19" viewBox="0 0 18 19"><path d="M3 9C3 4 15 4 15 9V15H3Z" fill="#e8a040"/><path d="M3 10H15" stroke="#a06020" stroke-width="1.5"/></svg>
<svg class="a" style="left:1874px;top:623px;" width="18" height="19" viewBox="0 0 18 19"><circle cx="8" cy="8" r="5.5" fill="none" stroke="#ddd" stroke-width="2"/><path d="M12 12L17 17" stroke="#ddd" stroke-width="2.5"/></svg>
<svg class="a" style="left:1898px;top:623px;" width="18" height="19" viewBox="0 0 18 19"><rect x="1" y="2" width="16" height="15" fill="#ddd"/><ellipse cx="9" cy="10" rx="6" ry="4" fill="#333"/><circle cx="9" cy="10" r="2" fill="#ddd"/></svg>
<div class="a" style="left:1317px;top:646px;width:603px;height:357px;background:#2f2f2f;"></div>
<div class="a" style="left:1317px;top:646px;width:4px;height:357px;background:#3a3a3a;"></div>
<div class="t" style="left:1795.0px;top:666.4px;font-size:22px;color:#4e4e4e;font-family:'Liberation Sans',sans-serif;font-weight:bold;transform:scaleX(1.090);">Geometry</div>
<svg class="a" style="left:1486px;top:780px;" width="72" height="72" viewBox="0 0 72 72"><defs><radialGradient id="nd" cx="0.5" cy="0.5" r="0.5"><stop offset="0" stop-color="#a878e8"/><stop offset="0.35" stop-color="#9a70e0"/><stop offset="0.62" stop-color="#7a70d8"/><stop offset="0.75" stop-color="#5a78c8"/><stop offset="1" stop-color="#5272c0"/></radialGradient></defs><ellipse cx="36" cy="37" rx="28" ry="32" fill="url(#nd)"/></svg>
<svg class="a" style="left:1515px;top:795px" width="14" height="44" viewBox="0 0 14 44"><ellipse cx="7" cy="6" rx="3.5" ry="4" fill="#c8c8d4"/><ellipse cx="7" cy="38" rx="3.5" ry="4" fill="#c8c8d4"/></svg>
<div class="a" style="left:1490px;top:805px;width:64px;height:24px;border:2px solid #e8c840;border-radius:4px;background:#d8d8d8"></div>
<svg class="a" style="left:1492px;top:807px;" width="60" height="20" viewBox="0 0 60 20"><path d="M6 0L4 20M14 0L12 20M26 0L24 20M42 0L40 20" stroke="#8090a8" stroke-width="0.8"/><rect x="52" y="1" width="7" height="18" fill="#3a90e0"/><ellipse cx="30" cy="11" rx="6" ry="4" fill="#e89030"/><ellipse cx="30" cy="9" rx="3" ry="2" fill="#f8c060"/></svg>
<div class="t" style="left:1557.0px;top:810.0px;font-size:12.5px;color:#c8c8c8;font-family:'Liberation Sans',sans-serif;transform:scaleX(0.994);">pyroburstsource1</div>
<svg class="a" style="left:1558px;top:825px;" width="26" height="12" viewBox="0 0 26 12"><circle cx="6" cy="6" r="4" fill="none" stroke="#6a8a50" stroke-width="1.3"/><path d="M6 3.5V6L4.5 7.5" stroke="#6a8a50" stroke-width="1"/><rect x="16" y="6" width="7" height="6" fill="#4e4e4e"/><path d="M17.3 6V4.5a2.2 2.2 0 0 1 4.4 0V6" stroke="#4e4e4e" stroke-width="1.2" fill="none"/></svg>
<div class="a" style="left:1772.0px;top:846.0px;width:22px;height:23px;background:#d01c14;"></div>
<div class="a" style="left:1796.5px;top:846.0px;width:22px;height:23px;background:#e81a10;"></div>
<div class="a" style="left:1821.0px;top:846.0px;width:22px;height:23px;background:#f44a48;"></div>
<div class="a" style="left:1845.5px;top:846.0px;width:22px;height:23px;background:#ffb4b4;"></div>
<div class="a" style="left:1870.0px;top:846.0px;width:22px;height:23px;background:#ff90a0;"></div>
<div class="a" style="left:1894.5px;top:846.0px;width:22px;height:23px;background:#a85868;"></div>
<div class="a" style="left:1772.0px;top:871.8px;width:22px;height:23px;background:#9a5a06;"></div>
<div class="a" style="left:1796.5px;top:871.8px;width:22px;height:23px;background:#c48c1c;"></div>
<div class="a" style="left:1821.0px;top:871.8px;width:22px;height:23px;background:#f8b848;"></div>
<div class="a" style="left:1845.5px;top:871.8px;width:22px;height:23px;background:#fff0a8;"></div>
<div class="a" style="left:1870.0px;top:871.8px;width:22px;height:23px;background:#ffe810;"></div>
<div class="a" style="left:1894.5px;top:871.8px;width:22px;height:23px;background:#ffbc10;"></div>
<div class="a" style="left:1772.0px;top:897.6px;width:22px;height:23px;background:#3c8a20;"></div>
<div class="a" style="left:1796.5px;top:897.6px;width:22px;height:23px;background:#78d040;"></div>
<div class="a" style="left:1821.0px;top:897.6px;width:22px;height:23px;background:#c8f0a0;"></div>
<div class="a" style="left:1845.5px;top:897.6px;width:22px;height:23px;background:#a0dcc8;"></div>
<div class="a" style="left:1870.0px;top:897.6px;width:22px;height:23px;background:#20a888;"></div>
<div class="a" style="left:1894.5px;top:897.6px;width:22px;height:23px;background:#2a8a78;"></div>
<div class="a" style="left:1772.0px;top:923.4px;width:22px;height:23px;background:#1c5cc0;"></div>
<div class="a" style="left:1796.5px;top:923.4px;width:22px;height:23px;background:#4090e0;"></div>
<div class="a" style="left:1821.0px;top:923.4px;width:22px;height:23px;background:#90c8f8;"></div>
<div class="a" style="left:1845.5px;top:923.4px;width:22px;height:23px;background:#b8c8f8;"></div>
<div class="a" style="left:1870.0px;top:923.4px;width:22px;height:23px;background:#8c9cc8;"></div>
<div class="a" style="left:1894.5px;top:923.4px;width:22px;height:23px;background:#5870a8;"></div>
<div class="a" style="left:1772.0px;top:949.2px;width:22px;height:23px;background:#5840a0;"></div>
<div class="a" style="left:1796.5px;top:949.2px;width:22px;height:23px;background:#7050d0;"></div>
<div class="a" style="left:1821.0px;top:949.2px;width:22px;height:23px;background:#8878e0;"></div>
<div class="a" style="left:1845.5px;top:949.2px;width:22px;height:23px;background:#e058c8;"></div>
<div class="a" style="left:1870.0px;top:949.2px;width:22px;height:23px;background:#a03888;"></div>
<div class="a" style="left:1894.5px;top:949.2px;width:22px;height:23px;background:#6a2c68;"></div>
<div class="a" style="left:1772.0px;top:975.0px;width:22px;height:23px;background:#000000;"></div>
<div class="a" style="left:1796.5px;top:975.0px;width:22px;height:23px;background:#555555;"></div>
<div class="a" style="left:1821.0px;top:975.0px;width:22px;height:23px;background:#808080;"></div>
<div class="a" style="left:1845.5px;top:975.0px;width:22px;height:23px;background:#a4a4a4;"></div>
<div class="a" style="left:1870.0px;top:975.0px;width:22px;height:23px;background:#d8d8d8;"></div>
<div class="a" style="left:1894.5px;top:975.0px;width:22px;height:23px;background:#fff0f0;"></div>
<div class="a" style="left:0px;top:1003px;width:1920px;height:77px;background:#2e2e2e;"></div>
<div class="a" style="left:0px;top:1003px;width:1920px;height:1px;background:#1a1a1a;"></div>
<div class="a" style="left:13px;top:1004px;width:1907px;height:1px;background:#4a4a4a;"></div>
<div class="a" style="left:4px;top:1005px;width:8px;height:72px;background:#3a3a3a"></div>
<svg class="a" style="left:4px;top:1068px;" width="8" height="7" viewBox="0 0 8 7"><path d="M0 0H8L4 7Z" fill="#111"/></svg>
<div class="a" style="left:12px;top:1004px;width:1px;height:76px;background:#222;"></div>
<div class="a" style="left:15px;top:1012px;width:27px;height:29px;background:linear-gradient(#454545,#3a3a3a);border:1px solid #262626"></div>
<svg class="a" style="left:19.5px;top:1017.5px;" width="18" height="18" viewBox="0 0 18 18"><rect x="1" y="3" width="2.5" height="12" fill="#ddd"/><path d="M10 3V15L4 9Z M17 3V15L11 9Z" fill="#ddd"/></svg>
<div class="a" style="left:42px;top:1012px;width:27px;height:29px;background:linear-gradient(#454545,#3a3a3a);border:1px solid #262626"></div>
<svg class="a" style="left:46.5px;top:1017.5px;" width="18" height="18" viewBox="0 0 18 18"><path d="M14 2V16L4 9Z" fill="#ddd"/></svg>
<div class="a" style="left:69px;top:1012px;width:27px;height:29px;background:#5f7290;border:1px solid #262626"></div>
<svg class="a" style="left:73.5px;top:1017.5px;" width="18" height="18" viewBox="0 0 18 18"><rect x="3" y="3" width="12" height="12" fill="#ddd"/></svg>
<div class="a" style="left:96px;top:1012px;width:27px;height:29px;background:linear-gradient(#454545,#3a3a3a);border:1px solid #262626"></div>
<svg class="a" style="left:100.5px;top:1017.5px;" width="18" height="18" viewBox="0 0 18 18"><path d="M4 2V16L14 9Z" fill="#ddd"/></svg>
<div class="a" style="left:123px;top:1012px;width:27px;height:29px;background:linear-gradient(#454545,#3a3a3a);border:1px solid #262626"></div>
<svg class="a" style="left:127.5px;top:1017.5px;" width="18" height="18" viewBox="0 0 18 18"><path d="M1 3V15L7 9Z M8 3V15L14 9Z" fill="#ddd"/><rect x="14.5" y="3" width="2.5" height="12" fill="#ddd"/></svg>
<div class="a" style="left:154px;top:1014px;width:45px;height:27px;background:#1a1a1a;"></div>
<div class="t" style="left:158.0px;top:1022.8px;font-size:12px;color:#e0e0e0;font-family:'Liberation Sans',sans-serif;">1</div>
<div class="a" style="left:202px;top:1012px;width:13px;height:29px;background:linear-gradient(#454545,#3a3a3a);border:1px solid #262626"></div>
<svg class="a" style="left:199.5px;top:1017.5px;" width="18" height="18" viewBox="0 0 18 18"><path d="M11 4V14L6 9Z" fill="#ddd"/><rect x="12" y="4" width="2" height="10" fill="#ddd"/></svg>
<div class="a" style="left:216px;top:1012px;width:13px;height:29px;background:linear-gradient(#454545,#3a3a3a);border:1px solid #262626"></div>
<svg class="a" style="left:213.5px;top:1017.5px;" width="18" height="18" viewBox="0 0 18 18"><rect x="4" y="4" width="2" height="10" fill="#ddd"/><path d="M7 4V14L12 9Z" fill="#ddd"/></svg>
<div class="a" style="left:236px;top:1028px;width:1432px;height:2px;background:#6a6a6a;"></div>
<svg class="a" style="left:236px;top:1020px;" width="1435" height="20" viewBox="0 0 1435 20"><rect x="28.5" y="4" width="1" height="10" fill="#a0a8b0"/><rect x="64.4" y="4" width="1" height="10" fill="#a0a8b0"/><rect x="100.3" y="4" width="1" height="10" fill="#a0a8b0"/><rect x="136.2" y="1" width="1" height="16" fill="#b0b8c0"/><rect x="172.1" y="4" width="1" height="10" fill="#a0a8b0"/><rect x="208.0" y="4" width="1" height="10" fill="#a0a8b0"/><rect x="243.9" y="4" width="1" height="10" fill="#a0a8b0"/><rect x="279.8" y="1" width="1" height="16" fill="#b0b8c0"/><rect x="315.8" y="4" width="1" height="10" fill="#a0a8b0"/><rect x="351.7" y="4" width="1" height="10" fill="#a0a8b0"/><rect x="387.6" y="4" width="1" height="10" fill="#a0a8b0"/><rect x="423.5" y="1" width="1" height="16" fill="#b0b8c0"/><rect x="459.4" y="4" width="1" height="10" fill="#a0a8b0"/><rect x="495.3" y="4" width="1" height="10" fill="#a0a8b0"/><rect x="531.2" y="4" width="1" height="10" fill="#a0a8b0"/><rect x="567.1" y="1" width="1" height="16" fill="#b0b8c0"/><rect x="603.0" y="4" width="1" height="10" fill="#a0a8b0"/><rect x="638.9" y="4" width="1" height="10" fill="#a0a8b0"/><rect x="674.8" y="4" width="1" height="10" fill="#a0a8b0"/><rect x="710.8" y="1" width="1" height="16" fill="#b0b8c0"/><rect x="746.7" y="4" width="1" height="10" fill="#a0a8b0"/><rect x="782.6" y="4" width="1" height="10" fill="#a0a8b0"/><rect x="818.5" y="4" width="1" height="10" fill="#a0a8b0"/><rect x="854.4" y="1" width="1" height="16" fill="#b0b8c0"/><rect x="890.3" y="4" width="1" height="10" fill="#a0a8b0"/><rect x="926.2" y="4" width="1" height="10" fill="#a0a8b0"/><rect x="962.1" y="4" width="1" height="10" fill="#a0a8b0"/><rect x="998.0" y="1" width="1" height="16" fill="#b0b8c0"/><rect x="1034.0" y="4" width="1" height="10" fill="#a0a8b0"/><rect x="1069.9" y="4" width="1" height="10" fill="#a0a8b0"/><rect x="1105.8" y="4" width="1" height="10" fill="#a0a8b0"/><rect x="1141.7" y="1" width="1" height="16" fill="#b0b8c0"/><rect x="1177.6" y="4" width="1" height="10" fill="#a0a8b0"/><rect x="1213.5" y="4" width="1" height="10" fill="#a0a8b0"/><rect x="1249.4" y="4" width="1" height="10" fill="#a0a8b0"/><rect x="1285.3" y="1" width="1" height="16" fill="#b0b8c0"/><rect x="1321.2" y="4" width="1" height="10" fill="#a0a8b0"/><rect x="1357.1" y="4" width="1" height="10" fill="#a0a8b0"/><rect x="1393.1" y="4" width="1" height="10" fill="#a0a8b0"/><rect x="1429.0" y="1" width="1" height="16" fill="#b0b8c0"/></svg>
<div class="t" style="left:372.2px;top:1006.0px;font-size:10px;color:#a8a8a8;font-family:'Liberation Sans',sans-serif;transform:scaleX(0.880);">24</div>
<div class="t" style="left:515.8px;top:1006.0px;font-size:10px;color:#a8a8a8;font-family:'Liberation Sans',sans-serif;transform:scaleX(0.880);">48</div>
<div class="t" style="left:659.5px;top:1006.0px;font-size:10px;color:#a8a8a8;font-family:'Liberation Sans',sans-serif;transform:scaleX(0.880);">72</div>
<div class="t" style="left:803.1px;top:1006.0px;font-size:10px;color:#a8a8a8;font-family:'Liberation Sans',sans-serif;transform:scaleX(0.880);">96</div>
<div class="t" style="left:946.8px;top:1006.0px;font-size:10px;color:#a8a8a8;font-family:'Liberation Sans',sans-serif;transform:scaleX(0.880);">120</div>
<div class="t" style="left:1090.4px;top:1006.0px;font-size:10px;color:#a8a8a8;font-family:'Liberation Sans',sans-serif;transform:scaleX(0.880);">144</div>
<div class="t" style="left:1234.0px;top:1006.0px;font-size:10px;color:#a8a8a8;font-family:'Liberation Sans',sans-serif;transform:scaleX(0.880);">168</div>
<div class="t" style="left:1377.7px;top:1006.0px;font-size:10px;color:#a8a8a8;font-family:'Liberation Sans',sans-serif;transform:scaleX(0.880);">192</div>
<div class="t" style="left:1521.3px;top:1006.0px;font-size:10px;color:#a8a8a8;font-family:'Liberation Sans',sans-serif;transform:scaleX(0.880);">216</div>
<div class="t" style="left:1664.0px;top:1006.0px;font-size:10px;color:#a8a8a8;font-family:'Liberation Sans',sans-serif;transform:scaleX(0.899);">2</div>
<div class="a" style="left:235px;top:1006px;width:26px;height:20px;background:#000;border:1.5px solid #eee"></div>
<svg class="a" style="left:235px;top:1024px;" width="8" height="7" viewBox="0 0 8 7"><path d="M1 0L1 6L7 0" stroke="#eee" stroke-width="1.3" fill="#000"/></svg>
<div class="t" style="left:242.0px;top:1010.5px;font-size:13px;color:#fff;font-family:'Liberation Sans',sans-serif;">1</div>
<div class="a" style="left:15px;top:1050px;width:27px;height:26px;background:linear-gradient(#454545,#3a3a3a);border:1px solid #262626"></div>
<svg class="a" style="left:19.5px;top:1054.0px;" width="18" height="18" viewBox="0 0 18 18"><rect x="3" y="2" width="11" height="11" fill="#ccc"/><path d="M9 8V18L12 15L15 18L16 17L13 14H17Z" fill="#fff" stroke="#333" stroke-width="0.6"/></svg>
<div class="a" style="left:42px;top:1050px;width:27px;height:26px;background:linear-gradient(#454545,#3a3a3a);border:1px solid #262626"></div>
<svg class="a" style="left:46.5px;top:1054.0px;" width="18" height="18" viewBox="0 0 18 18"><ellipse cx="11" cy="9" rx="5" ry="8" fill="none" stroke="#ccc" stroke-width="1.5"/><path d="M2 6H6L9 3V15L6 12H2Z" fill="#ccc"/></svg>
<div class="a" style="left:69px;top:1050px;width:27px;height:26px;background:linear-gradient(#454545,#3a3a3a);border:1px solid #262626"></div>
<svg class="a" style="left:73.5px;top:1054.0px;" width="18" height="18" viewBox="0 0 18 18"><path d="M3 12C3 5 15 5 15 11H3" stroke="#ddd" stroke-width="1.8" fill="none"/><path d="M2 5L5 2V8Z" fill="#ddd"/><path d="M13 15H18L15.5 18Z" fill="#888"/></svg>
<div class="a" style="left:96px;top:1050px;width:27px;height:26px;background:#5f7290;border:1px solid #262626"></div>
<svg class="a" style="left:100.5px;top:1054.0px;" width="18" height="18" viewBox="0 0 18 18"><circle cx="9" cy="9" r="7.5" fill="none" stroke="#ddd" stroke-width="1.6"/><path d="M9 4V10" stroke="#ddd" stroke-width="1.6"/></svg>
<div class="a" style="left:123px;top:1050px;width:27px;height:26px;background:linear-gradient(#454545,#3a3a3a);border:1px solid #262626"></div>
<svg class="a" style="left:127.5px;top:1054.0px;" width="18" height="18" viewBox="0 0 18 18"><path d="M2 5V13M6 5V9M10 5V9M14 5V13" stroke="#ccc" stroke-width="1.3"/><path d="M15 12L18 15L15 18Z" fill="#888"/></svg>
<div class="a" style="left:150px;top:1050px;width:27px;height:26px;background:linear-gradient(#454545,#3a3a3a);border:1px solid #262626"></div>
<svg class="a" style="left:154.5px;top:1054.0px;" width="18" height="18" viewBox="0 0 18 18"><path d="M1 9H17" stroke="#ccc" stroke-width="1.5"/><circle cx="10" cy="9" r="3" fill="#ddd"/></svg>
<div class="a" style="left:180px;top:1050px;width:23px;height:26px;background:linear-gradient(#454545,#3a3a3a);border:1px solid #262626"></div>
<svg class="a" style="left:182.5px;top:1054.0px;" width="18" height="18" viewBox="0 0 18 18"><path d="M13 4V14L7 9Z" fill="#4a5a3a"/><rect x="4" y="4" width="2" height="10" fill="#4a5a3a"/></svg>
<div class="a" style="left:203px;top:1050px;width:23px;height:26px;background:linear-gradient(#454545,#3a3a3a);border:1px solid #262626"></div>
<svg class="a" style="left:205.5px;top:1054.0px;" width="18" height="18" viewBox="0 0 18 18"><path d="M5 4V14L11 9Z" fill="#4a5a3a"/><rect x="12" y="4" width="2" height="10" fill="#4a5a3a"/></svg>
<div class="a" style="left:237px;top:1053px;width:40px;height:21px;background:#232323;"></div>
<div class="t" style="left:241.0px;top:1057.8px;font-size:12px;color:#e0e0e0;font-family:'Liberation Sans',sans-serif;">1</div>
<div class="a" style="left:281px;top:1053px;width:40px;height:21px;background:#232323;"></div>
<div class="t" style="left:285.0px;top:1057.8px;font-size:12px;color:#e0e0e0;font-family:'Liberation Sans',sans-serif;">1</div>
<div class="a" style="left:326px;top:1061px;width:1250px;height:3px;background:#7a7a7a;"></div>
<svg class="a" style="left:323px;top:1055px;" width="8" height="14" viewBox="0 0 8 14"><path d="M1 0L7 7L1 14Z" fill="#bbb"/></svg>
<svg class="a" style="left:1569px;top:1055px;" width="8" height="14" viewBox="0 0 8 14"><path d="M7 0L1 7L7 14Z" fill="#bbb"/></svg>
<div class="a" style="left:1580px;top:1053px;width:41px;height:21px;background:#232323;"></div>
<div class="t" style="left:1584.0px;top:1057.8px;font-size:12px;color:#e0e0e0;font-family:'Liberation Sans',sans-serif;">240</div>
<div class="a" style="left:1625px;top:1053px;width:42px;height:21px;background:#232323;"></div>
<div class="t" style="left:1629.0px;top:1057.8px;font-size:12px;color:#e0e0e0;font-family:'Liberation Sans',sans-serif;">240</div>
<svg class="a" style="left:1672px;top:1020px;" width="42" height="42" viewBox="0 0 42 42"><circle cx="20" cy="21" r="19" fill="#363636" stroke="#2c2c2c"/><path d="M13 29L21 20M14 25L17 27M16 23L19 25" stroke="#5c5c5c" stroke-width="2"/><circle cx="24" cy="16" r="4.5" fill="none" stroke="#5c5c5c" stroke-width="2.2"/></svg>
<div class="a" style="left:1706px;top:1030px;width:21px;height:24px;background:#3a3a3a;border:1px solid #2a2a2a"></div>
<svg class="a" style="left:1712px;top:1038px;" width="8" height="6" viewBox="0 0 8 6"><path d="M0 0H8L4 6Z" fill="#aaa"/></svg>
<div class="a" style="left:1733px;top:1014px;width:24px;height:24px;background:#444;border:1px solid #222"></div>
<svg class="a" style="left:1736px;top:1017px;" width="18" height="18" viewBox="0 0 18 18"><path d="M3 9a6 6 0 0 1 11-3M15 9a6 6 0 0 1-11 3" stroke="#ccc" stroke-width="1.6" fill="none"/><rect x="6" y="6" width="6" height="6" fill="none" stroke="#ccc"/></svg>
<div class="a" style="left:1733px;top:1045px;width:24px;height:24px;background:#444;border:1px solid #222"></div>
<div class="a" style="left:1737px;top:1049px;width:16px;height:16px;background:#111;"></div>
<svg class="a" style="left:1737px;top:1049px;" width="16" height="16" viewBox="0 0 16 16"><path d="M0 8H16" stroke="#aaa"/><path d="M1 8C3 0 6 0 8 8S13 16 15 8" stroke="#eee" stroke-width="1.2" fill="none"/><path d="M1 8C4 13 12 3 15 8" stroke="#e0a040" stroke-width="0.8" fill="none"/></svg>
<div class="a" style="left:1762px;top:1013px;width:150px;height:24px;background:linear-gradient(#4a4a4a,#3e3e3e);border:1px solid #262626;border-radius:2px"></div>
<div class="t" style="left:1779.0px;top:1019.3px;font-size:12px;color:#d0d0d0;font-family:'Liberation Sans',sans-serif;transform:scaleX(0.896);">0 keys, 0/0 channels</div>
<svg class="a" style="left:1898px;top:1021px;" width="8" height="7" viewBox="0 0 8 7"><path d="M4 0L8 7H0Z" fill="#ccc"/></svg>
<div class="a" style="left:1760px;top:1044px;width:152px;height:24px;background:linear-gradient(#4a4a4a,#3e3e3e);border:1px solid #262626;border-radius:2px"></div>
<div class="a" style="left:1889px;top:1045px;width:22px;height:22px;background:#3a3a3a;"></div>
<div class="t" style="left:1774.0px;top:1050.3px;font-size:12px;color:#d0d0d0;font-family:'Liberation Sans',sans-serif;transform:scaleX(0.904);">Key All Channels</div>
<svg class="a" style="left:1898px;top:1049px;" width="8" height="14" viewBox="0 0 8 14"><path d="M4 0L8 5H0Z M4 14L8 9H0Z" fill="#999"/></svg>
</body></html>
